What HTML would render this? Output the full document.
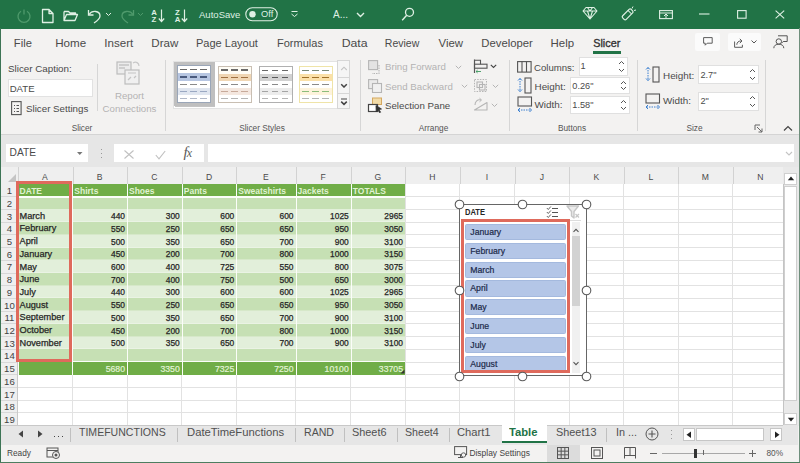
<!DOCTYPE html>
<html><head><meta charset="utf-8"><style>
html,body{margin:0;padding:0;}
body{width:800px;height:463px;overflow:hidden;position:relative;font-family:"Liberation Sans", sans-serif;background:#f3f2f1;}
</style></head><body>
<div style="position:absolute;left:0px;top:0px;width:800px;height:29px;background:#217346"></div>
<svg style="position:absolute;left:16px;top:8px;" width="16" height="16" viewBox="0 0 16 16" fill="none"><path d="M5 3.2 A6 6 0 1 0 11 3.2" stroke="#4f9a6c" stroke-width="1.3"/><path d="M8 1.5v5" stroke="#4f9a6c" stroke-width="1.3"/></svg>
<svg style="position:absolute;left:41px;top:8px;" width="14" height="16" viewBox="0 0 14 16" fill="none"><path d="M1.5 1.5h6.5l4 4v9h-10.5z M8 1.5v4h4" stroke="#dff0e4" stroke-width="1.3" stroke-linejoin="round"/></svg>
<svg style="position:absolute;left:63px;top:10px;" width="16" height="12" viewBox="0 0 16 12" fill="none"><path d="M1 1.5h4.5l1.5 1.5h5.5v2 M1 1.5v9h11l2.5-6h-11l-2.5 6" stroke="#dff0e4" stroke-width="1.3" stroke-linejoin="round"/></svg>
<svg style="position:absolute;left:87px;top:8px;" width="16" height="16" viewBox="0 0 16 16" fill="none"><path d="M2 6.5 C5 2, 13 2.5, 13 8 C13 11, 10 13, 7 15" stroke="#dff0e4" stroke-width="1.3"/><path d="M1.5 2v5h5" stroke="#dff0e4" stroke-width="1.3"/></svg>
<svg style="position:absolute;left:105px;top:12px;" width="7" height="5" viewBox="0 0 7 5" fill="none"><path d="M1 1l2.5 2.5L6 1" stroke="#dff0e4" stroke-width="1"/></svg>
<svg style="position:absolute;left:119px;top:8px;" width="16" height="16" viewBox="0 0 16 16" fill="none"><path d="M14 6.5 C11 2, 3 2.5, 3 8 C3 11, 6 13, 9 15" stroke="#4f9a6c" stroke-width="1.3"/><path d="M14.5 2v5h-5" stroke="#4f9a6c" stroke-width="1.3"/></svg>
<svg style="position:absolute;left:137px;top:12px;" width="7" height="5" viewBox="0 0 7 5" fill="none"><path d="M1 1l2.5 2.5L6 1" stroke="#4f9a6c" stroke-width="1"/></svg>
<div style="position:absolute;left:150px;top:8.5px;width:8px;font-size:7.8px;line-height:7px;font-weight:bold;color:#dff0e4;text-align:center">A<br>Z</div>
<svg style="position:absolute;left:158px;top:9px;" width="7" height="14" viewBox="0 0 7 14" fill="none"><path d="M3.5 0.5v12 M0.8 9.5l2.7 3 2.7-3" stroke="#dff0e4" stroke-width="1.2"/></svg>
<div style="position:absolute;left:173.5px;top:8.5px;width:8px;font-size:7.8px;line-height:7px;font-weight:bold;color:#dff0e4;text-align:center">Z<br>A</div>
<svg style="position:absolute;left:181px;top:9px;" width="7" height="14" viewBox="0 0 7 14" fill="none"><path d="M3.5 0.5v12 M0.8 9.5l2.7 3 2.7-3" stroke="#dff0e4" stroke-width="1.2"/></svg>
<div style="position:absolute;left:199px;top:9.825px;font-size:9.55px;line-height:9.55px;color:#dff0e4;font-weight:normal;white-space:nowrap;">AutoSave</div>
<svg style="position:absolute;left:245px;top:7px;" width="33" height="15" viewBox="0 0 33 15" fill="none"><rect x="0.8" y="0.8" width="31.4" height="13" rx="6.5" stroke="#dff0e4" stroke-width="1.1"/><circle cx="7.5" cy="7.3" r="3.2" fill="#dff0e4"/></svg>
<div style="position:absolute;left:261px;top:9.85px;font-size:9.3px;line-height:9.3px;color:#dff0e4;font-weight:normal;white-space:nowrap;">Off</div>
<svg style="position:absolute;left:290px;top:10px;" width="9" height="9" viewBox="0 0 9 9" fill="none"><path d="M1.5 1.5h6 M1.5 4l3 2.5 3-2.5" stroke="#dff0e4" stroke-width="1"/></svg>
<div style="position:absolute;left:333px;top:9.5px;font-size:10px;line-height:10px;color:#dff0e4;font-weight:normal;white-space:nowrap;">A...</div>
<svg style="position:absolute;left:355.5px;top:12px;" width="9" height="6" viewBox="0 0 9 6" fill="none"><path d="M1 1l3.5 3.5L8 1" stroke="#dff0e4" stroke-width="1.4"/></svg>
<svg style="position:absolute;left:400px;top:6px;" width="16" height="18" viewBox="0 0 16 18" fill="none"><circle cx="9.5" cy="6.3" r="4" stroke="#dff0e4" stroke-width="1.3"/><path d="M6.7 9.3l-4.5 5" stroke="#dff0e4" stroke-width="1.4"/></svg>
<svg style="position:absolute;left:582px;top:6px;" width="16" height="14" viewBox="0 0 16 14" fill="none"><path d="M1 5l3-3.5h8l3 3.5-7 8z M1 5h14 M5.5 1.5l2.5 3.5 2.5-3.5 M5.5 5l2.5 8 2.5-8" stroke="#dff0e4" stroke-width="1.1" stroke-linejoin="round"/></svg>
<svg style="position:absolute;left:619px;top:5px;" width="18" height="18" viewBox="0 0 18 18" fill="none"><g transform="rotate(45 9 9)"><rect x="6.5" y="3.5" width="5" height="12" rx="1.5" stroke="#dff0e4" stroke-width="1.2"/><path d="M6.5 6.5h5" stroke="#dff0e4" stroke-width="1"/></g><path d="M13 3.5l1-2 M15 5.5l2-0.5" stroke="#dff0e4" stroke-width="1"/></svg>
<svg style="position:absolute;left:659px;top:10px;" width="14" height="10" viewBox="0 0 14 10" fill="none"><rect x="0.6" y="0.6" width="12.8" height="8" stroke="#dff0e4" stroke-width="1.1"/><path d="M0.6 3h12.8 M7 4v4 M5 6l2-2 2 2" stroke="#dff0e4" stroke-width="1"/></svg>
<svg style="position:absolute;left:699px;top:13px;" width="11" height="2" viewBox="0 0 11 2" fill="none"><path d="M0 1h10.5" stroke="#dff0e4" stroke-width="1.1"/></svg>
<svg style="position:absolute;left:737px;top:10px;" width="10" height="9" viewBox="0 0 10 9" fill="none"><rect x="0.6" y="0.6" width="8.5" height="7.6" stroke="#dff0e4" stroke-width="1.1"/></svg>
<svg style="position:absolute;left:775px;top:10px;" width="10" height="9" viewBox="0 0 10 9" fill="none"><path d="M0.6 0.6l8.6 7.8 M9.2 0.6l-8.6 7.8" stroke="#dff0e4" stroke-width="1.1"/></svg>
<div style="position:absolute;left:0px;top:28.5px;width:800px;height:105.5px;background:#f3f2f1"></div>
<div style="position:absolute;left:-6px;top:37px;width:58px;text-align:center;font-size:11px;line-height:12px;color:#4a4a4a;font-weight:normal;white-space:nowrap"><span style="display:inline-block;transform:scaleX(1.015);transform-origin:center">File</span></div>
<div style="position:absolute;left:35px;top:37px;width:71px;text-align:center;font-size:11px;line-height:12px;color:#4a4a4a;font-weight:normal;white-space:nowrap"><span style="display:inline-block;transform:scaleX(1.056);transform-origin:center">Home</span></div>
<div style="position:absolute;left:84px;top:37px;width:69px;text-align:center;font-size:11px;line-height:12px;color:#4a4a4a;font-weight:normal;white-space:nowrap"><span style="display:inline-block;transform:scaleX(1.054);transform-origin:center">Insert</span></div>
<div style="position:absolute;left:131px;top:37px;width:67px;text-align:center;font-size:11px;line-height:12px;color:#4a4a4a;font-weight:normal;white-space:nowrap"><span style="display:inline-block;transform:scaleX(1.052);transform-origin:center">Draw</span></div>
<div style="position:absolute;left:176px;top:37px;width:102px;text-align:center;font-size:11px;line-height:12px;color:#4a4a4a;font-weight:normal;white-space:nowrap"><span style="display:inline-block;transform:scaleX(1.004);transform-origin:center">Page Layout</span></div>
<div style="position:absolute;left:257px;top:37px;width:86px;text-align:center;font-size:11px;line-height:12px;color:#4a4a4a;font-weight:normal;white-space:nowrap"><span style="display:inline-block;transform:scaleX(1.003);transform-origin:center">Formulas</span></div>
<div style="position:absolute;left:322px;top:37px;width:66px;text-align:center;font-size:11px;line-height:12px;color:#4a4a4a;font-weight:normal;white-space:nowrap"><span style="display:inline-block;transform:scaleX(1.118);transform-origin:center">Data</span></div>
<div style="position:absolute;left:364.5px;top:37px;width:74.5px;text-align:center;font-size:11px;line-height:12px;color:#4a4a4a;font-weight:normal;white-space:nowrap"><span style="display:inline-block;transform:scaleX(0.956);transform-origin:center">Review</span></div>
<div style="position:absolute;left:418.5px;top:37px;width:64.5px;text-align:center;font-size:11px;line-height:12px;color:#4a4a4a;font-weight:normal;white-space:nowrap"><span style="display:inline-block;transform:scaleX(1.036);transform-origin:center">View</span></div>
<div style="position:absolute;left:461px;top:37px;width:91.5px;text-align:center;font-size:11px;line-height:12px;color:#4a4a4a;font-weight:normal;white-space:nowrap"><span style="display:inline-block;transform:scaleX(1.027);transform-origin:center">Developer</span></div>
<div style="position:absolute;left:531px;top:37px;width:63.5px;text-align:center;font-size:11px;line-height:12px;color:#4a4a4a;font-weight:normal;white-space:nowrap"><span style="display:inline-block;transform:scaleX(1.039);transform-origin:center">Help</span></div>
<div style="position:absolute;left:573px;top:37px;width:67px;text-align:center;font-size:11px;line-height:12px;color:#333;font-weight:normal;-webkit-text-stroke:0.35px #333;white-space:nowrap"><span style="display:inline-block;transform:scaleX(0.981);transform-origin:center">Slicer</span></div>
<div style="position:absolute;left:593px;top:51.3px;width:27.5px;height:2.3px;background:#217346"></div>
<div style="position:absolute;left:695px;top:33px;width:25px;height:18px;background:#fbfbfb;border-radius:2px"></div>
<svg style="position:absolute;left:702.5px;top:37.3px;" width="10" height="9" viewBox="0 0 10 9" fill="none"><path d="M0.6 0.6h8.6v5.6h-5l-2 2v-2h-1.6z" stroke="#555" stroke-width="0.95" stroke-linejoin="round"/></svg>
<div style="position:absolute;left:728px;top:33px;width:33px;height:18px;background:#fbfbfb;border-radius:2px"></div>
<svg style="position:absolute;left:734px;top:37.5px;" width="11" height="10" viewBox="0 0 11 10" fill="none"><path d="M0.6 3.5v5.8h7.8v-2.5 M2.8 6.8c0-2.6 1.8-3.8 4.3-3.8 M5.8 0.8l2.2 2.2-2.2 2.2" stroke="#555" stroke-width="0.95" stroke-linejoin="round"/></svg>
<svg style="position:absolute;left:751px;top:40px;" width="6" height="4" viewBox="0 0 6 4" fill="none"><path d="M0.5 0.5l2.5 2.5 2.5-2.5" stroke="#555" stroke-width="1"/></svg>
<svg style="position:absolute;left:773px;top:34.5px;" width="15" height="14" viewBox="0 0 15 14" fill="none"><path d="M5 0.8h9.2v5.7h-4l-1.8 1.8" stroke="#555" stroke-width="1"/><circle cx="5.8" cy="6.5" r="2.7" stroke="#555" stroke-width="1"/><path d="M0.8 13.2c0-2.7 2.2-4 5-4s5 1.3 5 4" stroke="#555" stroke-width="1"/></svg>
<div style="position:absolute;left:97px;top:64px;width:1px;height:47px;background:#d6d6d6"></div>
<div style="position:absolute;left:165px;top:60px;width:1px;height:71px;background:#d6d6d6"></div>
<div style="position:absolute;left:359.5px;top:60px;width:1px;height:71px;background:#d6d6d6"></div>
<div style="position:absolute;left:508.5px;top:60px;width:1px;height:71px;background:#d6d6d6"></div>
<div style="position:absolute;left:637px;top:60px;width:1px;height:71px;background:#d6d6d6"></div>
<div style="position:absolute;left:765px;top:60px;width:1px;height:71px;background:#d6d6d6"></div>
<div style="position:absolute;left:8px;top:63.6px;font-size:9.8px;line-height:9.8px;color:#4a4a4a;font-weight:normal;white-space:nowrap;">Slicer Caption:</div>
<div style="position:absolute;left:8px;top:79px;width:85px;height:18px;background:#fff;border:1px solid #e2e2e2;box-sizing:border-box"></div>
<div style="position:absolute;left:9.7px;top:83.5px;font-size:9.6px;line-height:9.6px;color:#4a4a4a;font-weight:normal;white-space:nowrap;">DATE</div>
<svg style="position:absolute;left:11px;top:101px;" width="12" height="15" viewBox="0 0 12 15" fill="none"><rect x="0.6" y="0.6" width="9.5" height="13" stroke="#555" stroke-width="1.1"/><path d="M3 4.5h1 M5.5 4.5h2.5 M3 7.5h1 M5.5 7.5h2.5 M3 10.5h1 M5.5 10.5h2.5" stroke="#555" stroke-width="1"/></svg>
<div style="position:absolute;left:26px;top:103.625px;font-size:9.75px;line-height:9.75px;color:#4a4a4a;font-weight:normal;white-space:nowrap;">Slicer Settings</div>
<svg style="position:absolute;left:116px;top:60px;" width="30" height="27" viewBox="0 0 30 27" fill="none"><rect x="1" y="2" width="14" height="12" stroke="#bdbdbd" stroke-width="1.2" fill="#ececec"/><path d="M3 5h10 M3 8h6" stroke="#c4c4c4" stroke-width="1.3"/><rect x="9" y="10" width="14" height="14" stroke="#bdbdbd" stroke-width="1.2" fill="#f0f0f0"/><path d="M12 20l3-3 M18 18l2-2 M12 13h8" stroke="#c4c4c4" stroke-width="1.2"/><path d="M17 3c3-2 6 0 6 3" stroke="#c8c8c8" stroke-width="1.2"/></svg>
<div style="position:absolute;left:29.5px;top:90.65px;width:200px;text-align:center;font-size:9.7px;line-height:9.7px;color:#b3b3b3;font-weight:normal;white-space:nowrap;">Report</div>
<div style="position:absolute;left:29.5px;top:103.65px;width:200px;text-align:center;font-size:9.7px;line-height:9.7px;color:#b3b3b3;font-weight:normal;white-space:nowrap;">Connections</div>
<div style="position:absolute;left:-18px;top:124.04999999999998px;width:200px;text-align:center;font-size:8.3px;line-height:8.3px;color:#555;font-weight:normal;white-space:nowrap;">Slicer</div>
<div style="position:absolute;left:172.5px;top:60.5px;width:165px;height:48px;background:#fff;border:1px solid #e3e3e3;box-sizing:border-box"></div>
<div style="position:absolute;left:174.5px;top:63px;width:40px;height:43.5px;background:#c4c4c4"></div>
<div style="position:absolute;left:174.1px;top:62.4px;width:40.8px;height:44px;background:#bfbfbf"></div>
<div style="position:absolute;left:177.2px;top:65.2px;width:34.2px;height:38.3px;background:#fff;border:1px solid #9aa6b8;box-sizing:border-box"></div>
<div style="position:absolute;left:178.2px;top:66.2px;width:32.2px;height:7.26px;background:#fff"></div>
<div style="position:absolute;left:180.2px;top:69.23px;width:6.5px;height:1.2px;background:#6a6a6a"></div>
<div style="position:absolute;left:190.2px;top:69.23px;width:6.5px;height:1.2px;background:#6a6a6a"></div>
<div style="position:absolute;left:200.2px;top:69.23px;width:6.5px;height:1.2px;background:#6a6a6a"></div>
<div style="position:absolute;left:178.2px;top:73.46000000000001px;width:32.2px;height:7.26px;background:#b7c6e2"></div>
<div style="position:absolute;left:180.2px;top:76.49000000000001px;width:6.5px;height:1.2px;background:#4a5a7e"></div>
<div style="position:absolute;left:190.2px;top:76.49000000000001px;width:6.5px;height:1.2px;background:#4a5a7e"></div>
<div style="position:absolute;left:200.2px;top:76.49000000000001px;width:6.5px;height:1.2px;background:#4a5a7e"></div>
<div style="position:absolute;left:178.2px;top:80.72px;width:32.2px;height:7.26px;background:#fff"></div>
<div style="position:absolute;left:180.2px;top:83.75px;width:6.5px;height:1.2px;background:#8a8a8a"></div>
<div style="position:absolute;left:190.2px;top:83.75px;width:6.5px;height:1.2px;background:#8a8a8a"></div>
<div style="position:absolute;left:200.2px;top:83.75px;width:6.5px;height:1.2px;background:#8a8a8a"></div>
<div style="position:absolute;left:178.2px;top:87.98px;width:32.2px;height:7.26px;background:#dfe5ef"></div>
<div style="position:absolute;left:180.2px;top:91.01px;width:6.5px;height:1.2px;background:#9aa8c2"></div>
<div style="position:absolute;left:190.2px;top:91.01px;width:6.5px;height:1.2px;background:#9aa8c2"></div>
<div style="position:absolute;left:200.2px;top:91.01px;width:6.5px;height:1.2px;background:#9aa8c2"></div>
<div style="position:absolute;left:178.2px;top:95.24000000000001px;width:32.2px;height:7.26px;background:#fff"></div>
<div style="position:absolute;left:180.2px;top:98.27000000000001px;width:6.5px;height:1.2px;background:#b0b8c8"></div>
<div style="position:absolute;left:190.2px;top:98.27000000000001px;width:6.5px;height:1.2px;background:#b0b8c8"></div>
<div style="position:absolute;left:200.2px;top:98.27000000000001px;width:6.5px;height:1.2px;background:#b0b8c8"></div>
<div style="position:absolute;left:218px;top:65.5px;width:33.6px;height:37.5px;background:#fff;border:1px solid #c9bfb3;box-sizing:border-box"></div>
<div style="position:absolute;left:219px;top:66.5px;width:31.6px;height:7.1px;background:#fffdf6"></div>
<div style="position:absolute;left:221px;top:69.45px;width:6.5px;height:1.2px;background:#6a6a6a"></div>
<div style="position:absolute;left:231px;top:69.45px;width:6.5px;height:1.2px;background:#6a6a6a"></div>
<div style="position:absolute;left:241px;top:69.45px;width:6.5px;height:1.2px;background:#6a6a6a"></div>
<div style="position:absolute;left:219px;top:73.6px;width:31.6px;height:7.1px;background:#f0d6b4"></div>
<div style="position:absolute;left:221px;top:76.55px;width:6.5px;height:1.2px;background:#a07040"></div>
<div style="position:absolute;left:231px;top:76.55px;width:6.5px;height:1.2px;background:#a07040"></div>
<div style="position:absolute;left:241px;top:76.55px;width:6.5px;height:1.2px;background:#a07040"></div>
<div style="position:absolute;left:219px;top:80.7px;width:31.6px;height:7.1px;background:#fff"></div>
<div style="position:absolute;left:221px;top:83.65px;width:6.5px;height:1.2px;background:#8a8a8a"></div>
<div style="position:absolute;left:231px;top:83.65px;width:6.5px;height:1.2px;background:#8a8a8a"></div>
<div style="position:absolute;left:241px;top:83.65px;width:6.5px;height:1.2px;background:#8a8a8a"></div>
<div style="position:absolute;left:219px;top:87.8px;width:31.6px;height:7.1px;background:#f4e7df"></div>
<div style="position:absolute;left:221px;top:90.75px;width:6.5px;height:1.2px;background:#c8aa9a"></div>
<div style="position:absolute;left:231px;top:90.75px;width:6.5px;height:1.2px;background:#c8aa9a"></div>
<div style="position:absolute;left:241px;top:90.75px;width:6.5px;height:1.2px;background:#c8aa9a"></div>
<div style="position:absolute;left:219px;top:94.9px;width:31.6px;height:7.1px;background:#fff"></div>
<div style="position:absolute;left:221px;top:97.85000000000001px;width:6.5px;height:1.2px;background:#b4b4b4"></div>
<div style="position:absolute;left:231px;top:97.85000000000001px;width:6.5px;height:1.2px;background:#b4b4b4"></div>
<div style="position:absolute;left:241px;top:97.85000000000001px;width:6.5px;height:1.2px;background:#b4b4b4"></div>
<div style="position:absolute;left:258.5px;top:65.7px;width:34.2px;height:37.3px;background:#fff;border:1px solid #b0b0b0;box-sizing:border-box"></div>
<div style="position:absolute;left:259.5px;top:66.7px;width:32.2px;height:7.06px;background:#fff"></div>
<div style="position:absolute;left:261.5px;top:69.63000000000001px;width:6.5px;height:1.2px;background:#6a6a6a"></div>
<div style="position:absolute;left:271.5px;top:69.63000000000001px;width:6.5px;height:1.2px;background:#6a6a6a"></div>
<div style="position:absolute;left:281.5px;top:69.63000000000001px;width:6.5px;height:1.2px;background:#6a6a6a"></div>
<div style="position:absolute;left:259.5px;top:73.76px;width:32.2px;height:7.06px;background:#d2d2d2"></div>
<div style="position:absolute;left:261.5px;top:76.69000000000001px;width:6.5px;height:1.2px;background:#5a5a5a"></div>
<div style="position:absolute;left:271.5px;top:76.69000000000001px;width:6.5px;height:1.2px;background:#5a5a5a"></div>
<div style="position:absolute;left:281.5px;top:76.69000000000001px;width:6.5px;height:1.2px;background:#5a5a5a"></div>
<div style="position:absolute;left:259.5px;top:80.82000000000001px;width:32.2px;height:7.06px;background:#fff"></div>
<div style="position:absolute;left:261.5px;top:83.75000000000001px;width:6.5px;height:1.2px;background:#8a8a8a"></div>
<div style="position:absolute;left:271.5px;top:83.75000000000001px;width:6.5px;height:1.2px;background:#8a8a8a"></div>
<div style="position:absolute;left:281.5px;top:83.75000000000001px;width:6.5px;height:1.2px;background:#8a8a8a"></div>
<div style="position:absolute;left:259.5px;top:87.88px;width:32.2px;height:7.06px;background:#ececec"></div>
<div style="position:absolute;left:261.5px;top:90.81px;width:6.5px;height:1.2px;background:#a4a4a4"></div>
<div style="position:absolute;left:271.5px;top:90.81px;width:6.5px;height:1.2px;background:#a4a4a4"></div>
<div style="position:absolute;left:281.5px;top:90.81px;width:6.5px;height:1.2px;background:#a4a4a4"></div>
<div style="position:absolute;left:259.5px;top:94.94px;width:32.2px;height:7.06px;background:#fff"></div>
<div style="position:absolute;left:261.5px;top:97.87px;width:6.5px;height:1.2px;background:#b4b4b4"></div>
<div style="position:absolute;left:271.5px;top:97.87px;width:6.5px;height:1.2px;background:#b4b4b4"></div>
<div style="position:absolute;left:281.5px;top:97.87px;width:6.5px;height:1.2px;background:#b4b4b4"></div>
<div style="position:absolute;left:299.4px;top:65.7px;width:34.1px;height:37.3px;background:#fff;border:1px solid #efe4a8;box-sizing:border-box"></div>
<div style="position:absolute;left:300.4px;top:66.7px;width:32.1px;height:7.06px;background:#fff"></div>
<div style="position:absolute;left:302.4px;top:69.63000000000001px;width:6.5px;height:1.2px;background:#7a8a7a"></div>
<div style="position:absolute;left:312.4px;top:69.63000000000001px;width:6.5px;height:1.2px;background:#7a8a7a"></div>
<div style="position:absolute;left:322.4px;top:69.63000000000001px;width:6.5px;height:1.2px;background:#7a8a7a"></div>
<div style="position:absolute;left:300.4px;top:73.76px;width:32.1px;height:7.06px;background:#fbe0a8"></div>
<div style="position:absolute;left:302.4px;top:76.69000000000001px;width:6.5px;height:1.2px;background:#a07028"></div>
<div style="position:absolute;left:312.4px;top:76.69000000000001px;width:6.5px;height:1.2px;background:#a07028"></div>
<div style="position:absolute;left:322.4px;top:76.69000000000001px;width:6.5px;height:1.2px;background:#a07028"></div>
<div style="position:absolute;left:300.4px;top:80.82000000000001px;width:32.1px;height:7.06px;background:#fff"></div>
<div style="position:absolute;left:302.4px;top:83.75000000000001px;width:6.5px;height:1.2px;background:#8a8a8a"></div>
<div style="position:absolute;left:312.4px;top:83.75000000000001px;width:6.5px;height:1.2px;background:#8a8a8a"></div>
<div style="position:absolute;left:322.4px;top:83.75000000000001px;width:6.5px;height:1.2px;background:#8a8a8a"></div>
<div style="position:absolute;left:300.4px;top:87.88px;width:32.1px;height:7.06px;background:#fdf3dc"></div>
<div style="position:absolute;left:302.4px;top:90.81px;width:6.5px;height:1.2px;background:#8cbc7c"></div>
<div style="position:absolute;left:312.4px;top:90.81px;width:6.5px;height:1.2px;background:#8cbc7c"></div>
<div style="position:absolute;left:322.4px;top:90.81px;width:6.5px;height:1.2px;background:#8cbc7c"></div>
<div style="position:absolute;left:300.4px;top:94.94px;width:32.1px;height:7.06px;background:#fff"></div>
<div style="position:absolute;left:302.4px;top:97.87px;width:6.5px;height:1.2px;background:#b4b4b4"></div>
<div style="position:absolute;left:312.4px;top:97.87px;width:6.5px;height:1.2px;background:#b4b4b4"></div>
<div style="position:absolute;left:322.4px;top:97.87px;width:6.5px;height:1.2px;background:#b4b4b4"></div>
<div style="position:absolute;left:337.3px;top:60.2px;width:12.3px;height:49.2px;background:#f5f5f5;border:1px solid #d6d6d6;box-sizing:border-box"></div>
<div style="position:absolute;left:337.3px;top:77px;width:12.3px;height:1px;background:#d6d6d6"></div>
<div style="position:absolute;left:337.3px;top:93.2px;width:12.3px;height:1px;background:#d6d6d6"></div>
<svg style="position:absolute;left:339.5px;top:66px;" width="8" height="5" viewBox="0 0 8 5" fill="none"><path d="M1.2 4l2.8-2.8 2.8 2.8" stroke="#c4c4c4" stroke-width="1.1"/></svg>
<svg style="position:absolute;left:339.5px;top:83px;" width="8" height="5" viewBox="0 0 8 5" fill="none"><path d="M1.2 1.2l2.8 2.8 2.8-2.8" stroke="#444" stroke-width="1.5"/></svg>
<svg style="position:absolute;left:339.5px;top:97.5px;" width="8" height="8" viewBox="0 0 8 8" fill="none"><path d="M1 1h6" stroke="#555" stroke-width="1.1"/><path d="M1.2 3.6l2.8 2.8 2.8-2.8" stroke="#444" stroke-width="1.5"/></svg>
<div style="position:absolute;left:162px;top:124.04999999999998px;width:200px;text-align:center;font-size:8.3px;line-height:8.3px;color:#555;font-weight:normal;white-space:nowrap;">Slicer Styles</div>
<svg style="position:absolute;left:368px;top:60px;" width="15" height="14" viewBox="0 0 15 14" fill="none"><rect x="0.6" y="0.6" width="9" height="9" stroke="#b5b5b5" stroke-width="1.1" fill="#e3e3e3"/><path d="M11 5v8.5h-7" stroke="#b5b5b5" stroke-width="1.1" stroke-dasharray="1.5 1"/></svg>
<div style="position:absolute;left:385px;top:62.449999999999996px;font-size:9.7px;line-height:9.7px;color:#b3b3b3;font-weight:normal;white-space:nowrap;">Bring Forward</div>
<svg style="position:absolute;left:455px;top:65px;" width="7" height="5" viewBox="0 0 7 5" fill="none"><path d="M0.8 0.8l2.7 2.7 2.7-2.7" stroke="#b5b5b5" stroke-width="1"/></svg>
<svg style="position:absolute;left:368px;top:79px;" width="15" height="14" viewBox="0 0 15 14" fill="none"><rect x="0.6" y="0.6" width="9" height="9" stroke="#b5b5b5" stroke-width="1.1" fill="#eaeaea"/><rect x="4.5" y="4.5" width="9" height="9" stroke="#b5b5b5" stroke-width="1.1" fill="#f0f0f0"/></svg>
<div style="position:absolute;left:385px;top:81.55000000000001px;font-size:9.7px;line-height:9.7px;color:#b3b3b3;font-weight:normal;white-space:nowrap;">Send Backward</div>
<svg style="position:absolute;left:461px;top:84px;" width="7" height="5" viewBox="0 0 7 5" fill="none"><path d="M0.8 0.8l2.7 2.7 2.7-2.7" stroke="#b5b5b5" stroke-width="1"/></svg>
<svg style="position:absolute;left:367px;top:97px;" width="16" height="16" viewBox="0 0 16 16" fill="none"><rect x="5.5" y="1" width="9" height="6.5" stroke="#d4a860" stroke-width="1" fill="#f3dca8"/><rect x="1.5" y="7.5" width="9" height="7" stroke="#444" stroke-width="1.2" fill="#fff"/><path d="M9 8.5l5.5 3.5-2.5 0.6 1.6 2.6-1 0.6-1.6-2.6-1.8 1.8z" stroke="#333" stroke-width="0.8" fill="#333"/></svg>
<div style="position:absolute;left:385px;top:100.75px;font-size:9.7px;line-height:9.7px;color:#4a4a4a;font-weight:normal;white-space:nowrap;">Selection Pane</div>
<svg style="position:absolute;left:473px;top:59px;" width="16" height="15" viewBox="0 0 16 15" fill="none"><path d="M1.5 0.5v13.5" stroke="#555" stroke-width="1.2"/><path d="M1.5 1.2h6v4" stroke="#555" stroke-width="1.1"/><rect x="1.5" y="5.2" width="12.5" height="4" stroke="#555" stroke-width="1.1"/><path d="M3 12.5h5 M3 12.5l1.6-1.4 M3 12.5l1.6 1.4" stroke="#3d9a60" stroke-width="0.9"/></svg>
<svg style="position:absolute;left:490px;top:64px;" width="7" height="5" viewBox="0 0 7 5" fill="none"><path d="M0.8 0.8l2.7 2.7 2.7-2.7" stroke="#444" stroke-width="1.1"/></svg>
<svg style="position:absolute;left:473px;top:78px;" width="16" height="15" viewBox="0 0 16 15" fill="none"><rect x="1.5" y="1.5" width="12" height="12" stroke="#b5b5b5" stroke-width="1" stroke-dasharray="1.5 1.2"/><rect x="4" y="4" width="5.5" height="5.5" stroke="#b5b5b5" stroke-width="1.1"/><rect x="6.5" y="6.5" width="5.5" height="5.5" stroke="#b5b5b5" stroke-width="1.1"/></svg>
<svg style="position:absolute;left:492px;top:84px;" width="7" height="5" viewBox="0 0 7 5" fill="none"><path d="M0.8 0.8l2.7 2.7 2.7-2.7" stroke="#b5b5b5" stroke-width="1"/></svg>
<svg style="position:absolute;left:473px;top:97px;" width="16" height="15" viewBox="0 0 16 15" fill="none"><path d="M1.5 13h12.5v-7.5z" stroke="#b5b5b5" stroke-width="1.1" stroke-linejoin="round"/><path d="M2 8c0-3.5 2.5-6 6-5" stroke="#b5b5b5" stroke-width="1.1"/><path d="M6.5 1.2l2 1.8-2 1.8" stroke="#b5b5b5" stroke-width="1"/></svg>
<svg style="position:absolute;left:491px;top:103px;" width="7" height="5" viewBox="0 0 7 5" fill="none"><path d="M0.8 0.8l2.7 2.7 2.7-2.7" stroke="#b5b5b5" stroke-width="1"/></svg>
<div style="position:absolute;left:333.5px;top:124.04999999999998px;width:200px;text-align:center;font-size:8.3px;line-height:8.3px;color:#555;font-weight:normal;white-space:nowrap;">Arrange</div>
<svg style="position:absolute;left:517px;top:61px;" width="15" height="12" viewBox="0 0 15 12" fill="none"><rect x="0.6" y="0.6" width="13.5" height="10.5" stroke="#555" stroke-width="1.1"/><path d="M5 0.6v10.5 M9.5 0.6v10.5" stroke="#555" stroke-width="1.1"/></svg>
<div style="position:absolute;left:534px;top:62.7px;font-size:9.6px;line-height:9.6px;color:#4a4a4a;font-weight:normal;white-space:nowrap;">Columns:</div>
<div style="position:absolute;left:578.5px;top:57px;width:49px;height:19px;background:#fff;border:1px solid #e0e0e0;box-sizing:border-box"></div>
<div style="position:absolute;left:580.5px;top:62.4px;font-size:9.2px;line-height:9.2px;color:#4a4a4a;font-weight:normal;white-space:nowrap;">1</div>
<svg style="position:absolute;left:617.5px;top:60px;" width="7" height="5" viewBox="0 0 7 5" fill="none"><path d="M1 4l2.5-2.5L6 4" stroke="#555" stroke-width="1"/></svg>
<svg style="position:absolute;left:617.5px;top:68px;" width="7" height="5" viewBox="0 0 7 5" fill="none"><path d="M1 1l2.5 2.5L6 1" stroke="#555" stroke-width="1"/></svg>
<svg style="position:absolute;left:517px;top:77px;" width="16" height="17" viewBox="0 0 16 17" fill="none"><path d="M3 1.5v13" stroke="#3a7fd0" stroke-width="1" stroke-dasharray="1.5 1"/><path d="M1 3.5l2-2 2 2 M1 12.5l2 2 2-2" stroke="#3a7fd0" stroke-width="1"/><rect x="8" y="1" width="6" height="15" stroke="#555" stroke-width="1.1"/></svg>
<div style="position:absolute;left:534.5px;top:81.64999999999999px;font-size:9.9px;line-height:9.9px;color:#4a4a4a;font-weight:normal;white-space:nowrap;">Height:</div>
<div style="position:absolute;left:570.3px;top:77.4px;width:60px;height:17px;background:#fff;border:1px solid #e0e0e0;box-sizing:border-box"></div>
<div style="position:absolute;left:572.3px;top:81.80000000000001px;font-size:9.2px;line-height:9.2px;color:#4a4a4a;font-weight:normal;white-space:nowrap;">0.26"</div>
<svg style="position:absolute;left:620.3px;top:80.4px;" width="7" height="5" viewBox="0 0 7 5" fill="none"><path d="M1 4l2.5-2.5L6 4" stroke="#555" stroke-width="1"/></svg>
<svg style="position:absolute;left:620.3px;top:86.4px;" width="7" height="5" viewBox="0 0 7 5" fill="none"><path d="M1 1l2.5 2.5L6 1" stroke="#555" stroke-width="1"/></svg>
<svg style="position:absolute;left:517px;top:96px;" width="16" height="17" viewBox="0 0 16 17" fill="none"><rect x="1" y="1" width="13.5" height="9" stroke="#555" stroke-width="1.1"/><path d="M1.5 14h12.5" stroke="#3a7fd0" stroke-width="1" stroke-dasharray="1.5 1"/><path d="M3 12l-2 2 2 2 M12.5 12l2 2-2 2" stroke="#3a7fd0" stroke-width="1"/></svg>
<div style="position:absolute;left:534.5px;top:100.05px;font-size:9.9px;line-height:9.9px;color:#4a4a4a;font-weight:normal;white-space:nowrap;">Width:</div>
<div style="position:absolute;left:570.3px;top:96.3px;width:60px;height:18px;background:#fff;border:1px solid #e0e0e0;box-sizing:border-box"></div>
<div style="position:absolute;left:572.3px;top:101.2px;font-size:9.2px;line-height:9.2px;color:#4a4a4a;font-weight:normal;white-space:nowrap;">1.58"</div>
<svg style="position:absolute;left:620.3px;top:99.3px;" width="7" height="5" viewBox="0 0 7 5" fill="none"><path d="M1 4l2.5-2.5L6 4" stroke="#555" stroke-width="1"/></svg>
<svg style="position:absolute;left:620.3px;top:106.3px;" width="7" height="5" viewBox="0 0 7 5" fill="none"><path d="M1 1l2.5 2.5L6 1" stroke="#555" stroke-width="1"/></svg>
<div style="position:absolute;left:472px;top:124.04999999999998px;width:200px;text-align:center;font-size:8.3px;line-height:8.3px;color:#555;font-weight:normal;white-space:nowrap;">Buttons</div>
<svg style="position:absolute;left:645px;top:66px;" width="16" height="17" viewBox="0 0 16 17" fill="none"><path d="M3 1.5v13" stroke="#3a7fd0" stroke-width="1" stroke-dasharray="1.5 1"/><path d="M1 3.5l2-2 2 2 M1 12.5l2 2 2-2" stroke="#3a7fd0" stroke-width="1"/><rect x="8" y="1" width="6" height="15" stroke="#555" stroke-width="1.1"/></svg>
<div style="position:absolute;left:663px;top:70.64999999999999px;font-size:9.9px;line-height:9.9px;color:#4a4a4a;font-weight:normal;white-space:nowrap;">Height:</div>
<div style="position:absolute;left:698.4px;top:65.2px;width:61px;height:19px;background:#fff;border:1px solid #e0e0e0;box-sizing:border-box"></div>
<div style="position:absolute;left:700.4px;top:70.60000000000001px;font-size:9.2px;line-height:9.2px;color:#4a4a4a;font-weight:normal;white-space:nowrap;">2.7"</div>
<svg style="position:absolute;left:749.4px;top:68.2px;" width="7" height="5" viewBox="0 0 7 5" fill="none"><path d="M1 4l2.5-2.5L6 4" stroke="#555" stroke-width="1"/></svg>
<svg style="position:absolute;left:749.4px;top:76.2px;" width="7" height="5" viewBox="0 0 7 5" fill="none"><path d="M1 1l2.5 2.5L6 1" stroke="#555" stroke-width="1"/></svg>
<svg style="position:absolute;left:645px;top:93px;" width="16" height="17" viewBox="0 0 16 17" fill="none"><rect x="1" y="1" width="13.5" height="9" stroke="#555" stroke-width="1.1"/><path d="M1.5 14h12.5" stroke="#3a7fd0" stroke-width="1" stroke-dasharray="1.5 1"/><path d="M3 12l-2 2 2 2 M12.5 12l2 2-2 2" stroke="#3a7fd0" stroke-width="1"/></svg>
<div style="position:absolute;left:663px;top:96.35px;font-size:9.9px;line-height:9.9px;color:#4a4a4a;font-weight:normal;white-space:nowrap;">Width:</div>
<div style="position:absolute;left:698.4px;top:92.2px;width:61px;height:18.5px;background:#fff;border:1px solid #e0e0e0;box-sizing:border-box"></div>
<div style="position:absolute;left:700.4px;top:97.35000000000001px;font-size:9.2px;line-height:9.2px;color:#4a4a4a;font-weight:normal;white-space:nowrap;">2"</div>
<svg style="position:absolute;left:749.4px;top:95.2px;" width="7" height="5" viewBox="0 0 7 5" fill="none"><path d="M1 4l2.5-2.5L6 4" stroke="#555" stroke-width="1"/></svg>
<svg style="position:absolute;left:749.4px;top:102.7px;" width="7" height="5" viewBox="0 0 7 5" fill="none"><path d="M1 1l2.5 2.5L6 1" stroke="#555" stroke-width="1"/></svg>
<div style="position:absolute;left:594.5px;top:124.04999999999998px;width:200px;text-align:center;font-size:8.3px;line-height:8.3px;color:#555;font-weight:normal;white-space:nowrap;">Size</div>
<svg style="position:absolute;left:754px;top:124px;" width="9" height="9" viewBox="0 0 9 9" fill="none"><path d="M1 1h5 M1 1v5 M3 3l5 5 M8 4.5v3.5h-3.5" stroke="#666" stroke-width="1"/></svg>
<svg style="position:absolute;left:783px;top:125px;" width="10" height="7" viewBox="0 0 10 7" fill="none"><path d="M1 5.5l4-4 4 4" stroke="#444" stroke-width="1.2"/></svg>
<div style="position:absolute;left:0px;top:133.5px;width:800px;height:1px;background:#d4d4d4"></div>
<div style="position:absolute;left:0px;top:134.5px;width:800px;height:32px;background:#e6e6e6"></div>
<div style="position:absolute;left:5.7px;top:143.7px;width:82.3px;height:18.7px;background:#fff"></div>
<div style="position:absolute;left:9.6px;top:148.1px;font-size:10.2px;line-height:10.2px;color:#4a4a4a;font-weight:normal;white-space:nowrap;">DATE</div>
<svg style="position:absolute;left:77px;top:151.5px;" width="6" height="4" viewBox="0 0 6 4" fill="none"><path d="M0 0h5.5l-2.75 3z" fill="#777"/></svg>
<div style="position:absolute;left:100.5px;top:148.5px;width:1.5px;height:1.5px;background:#9a9a9a"></div>
<div style="position:absolute;left:100.5px;top:152.5px;width:1.5px;height:1.5px;background:#9a9a9a"></div>
<div style="position:absolute;left:100.5px;top:156.5px;width:1.5px;height:1.5px;background:#9a9a9a"></div>
<div style="position:absolute;left:114.4px;top:144px;width:90px;height:18px;background:#fff"></div>
<svg style="position:absolute;left:123.5px;top:149.5px;" width="10" height="9" viewBox="0 0 10 9" fill="none"><path d="M0.5 0.5l9 8 M9.5 0.5l-9 8" stroke="#c0c0c0" stroke-width="1.1"/></svg>
<svg style="position:absolute;left:155px;top:149.5px;" width="11" height="10" viewBox="0 0 11 10" fill="none"><path d="M0.8 5l3.2 3.8L10.2 1" stroke="#c0c0c0" stroke-width="1.1"/></svg>
<div style="position:absolute;left:183.5px;top:144.5px;font-family:'Liberation Serif';font-style:italic;font-size:15px;line-height:15px;color:#5a5a5a;letter-spacing:-1px">f<span style="font-size:12px">x</span></div>
<div style="position:absolute;left:207.6px;top:144px;width:586px;height:18px;background:#fff"></div>
<svg style="position:absolute;left:784.5px;top:150.5px;" width="8" height="5" viewBox="0 0 8 5" fill="none"><path d="M1 1l3 3L7 1" stroke="#c4c4c4" stroke-width="1.1"/></svg>
<div style="position:absolute;left:1px;top:166.5px;width:782px;height:17.5px;background:#efefef"></div>
<div style="position:absolute;left:1px;top:183.5px;width:782px;height:1px;background:#c9c9c9"></div>
<svg style="position:absolute;left:7.5px;top:173.5px;" width="8" height="8" viewBox="0 0 8 8" fill="none"><path d="M8 0v8h-8z" fill="#c4c4c4"/></svg>
<div style="position:absolute;left:17.5px;top:167px;width:1px;height:17px;background:#d2d2d2"></div>
<div style="position:absolute;left:-55.1px;top:173.0px;width:200px;text-align:center;font-size:8.6px;line-height:8.6px;color:#4a4a4a;font-weight:normal;white-space:nowrap;">A</div>
<div style="position:absolute;left:72.5px;top:167px;width:1px;height:17px;background:#d2d2d2"></div>
<div style="position:absolute;left:-0.3499999999999943px;top:173.0px;width:200px;text-align:center;font-size:8.6px;line-height:8.6px;color:#4a4a4a;font-weight:normal;white-space:nowrap;">B</div>
<div style="position:absolute;left:127.0px;top:167px;width:1px;height:17px;background:#d2d2d2"></div>
<div style="position:absolute;left:54.375px;top:173.0px;width:200px;text-align:center;font-size:8.6px;line-height:8.6px;color:#4a4a4a;font-weight:normal;white-space:nowrap;">C</div>
<div style="position:absolute;left:182.0px;top:167px;width:1px;height:17px;background:#d2d2d2"></div>
<div style="position:absolute;left:109.0px;top:173.0px;width:200px;text-align:center;font-size:8.6px;line-height:8.6px;color:#4a4a4a;font-weight:normal;white-space:nowrap;">D</div>
<div style="position:absolute;left:236.0px;top:167px;width:1px;height:17px;background:#d2d2d2"></div>
<div style="position:absolute;left:165.875px;top:173.0px;width:200px;text-align:center;font-size:8.6px;line-height:8.6px;color:#4a4a4a;font-weight:normal;white-space:nowrap;">E</div>
<div style="position:absolute;left:295.5px;top:167px;width:1px;height:17px;background:#d2d2d2"></div>
<div style="position:absolute;left:223.125px;top:173.0px;width:200px;text-align:center;font-size:8.6px;line-height:8.6px;color:#4a4a4a;font-weight:normal;white-space:nowrap;">F</div>
<div style="position:absolute;left:351.0px;top:167px;width:1px;height:17px;background:#d2d2d2"></div>
<div style="position:absolute;left:277.875px;top:173.0px;width:200px;text-align:center;font-size:8.6px;line-height:8.6px;color:#4a4a4a;font-weight:normal;white-space:nowrap;">G</div>
<div style="position:absolute;left:405.0px;top:167px;width:1px;height:17px;background:#d2d2d2"></div>
<div style="position:absolute;left:332.25px;top:173.0px;width:200px;text-align:center;font-size:8.6px;line-height:8.6px;color:#4a4a4a;font-weight:normal;white-space:nowrap;">H</div>
<div style="position:absolute;left:459.5px;top:167px;width:1px;height:17px;background:#d2d2d2"></div>
<div style="position:absolute;left:386.95px;top:173.0px;width:200px;text-align:center;font-size:8.6px;line-height:8.6px;color:#4a4a4a;font-weight:normal;white-space:nowrap;">I</div>
<div style="position:absolute;left:514.5px;top:167px;width:1px;height:17px;background:#d2d2d2"></div>
<div style="position:absolute;left:441.79999999999995px;top:173.0px;width:200px;text-align:center;font-size:8.6px;line-height:8.6px;color:#4a4a4a;font-weight:normal;white-space:nowrap;">J</div>
<div style="position:absolute;left:569.0px;top:167px;width:1px;height:17px;background:#d2d2d2"></div>
<div style="position:absolute;left:496.4000000000001px;top:173.0px;width:200px;text-align:center;font-size:8.6px;line-height:8.6px;color:#4a4a4a;font-weight:normal;white-space:nowrap;">K</div>
<div style="position:absolute;left:623.5px;top:167px;width:1px;height:17px;background:#d2d2d2"></div>
<div style="position:absolute;left:550.8px;top:173.0px;width:200px;text-align:center;font-size:8.6px;line-height:8.6px;color:#4a4a4a;font-weight:normal;white-space:nowrap;">L</div>
<div style="position:absolute;left:678.0px;top:167px;width:1px;height:17px;background:#d2d2d2"></div>
<div style="position:absolute;left:605.4px;top:173.0px;width:200px;text-align:center;font-size:8.6px;line-height:8.6px;color:#4a4a4a;font-weight:normal;white-space:nowrap;">M</div>
<div style="position:absolute;left:733.0px;top:167px;width:1px;height:17px;background:#d2d2d2"></div>
<div style="position:absolute;left:660.3px;top:173.0px;width:200px;text-align:center;font-size:8.6px;line-height:8.6px;color:#4a4a4a;font-weight:normal;white-space:nowrap;">N</div>
<div style="position:absolute;left:1px;top:184px;width:782px;height:242px;background:#fff"></div>
<div style="position:absolute;left:1px;top:184px;width:16.5px;height:241.5px;background:#efefef"></div>
<div style="position:absolute;left:17px;top:184px;width:1px;height:241.5px;background:#c9c9c9"></div>
<div style="position:absolute;left:1px;top:196.22px;width:16px;height:1px;background:#d8d8d8"></div>
<div style="position:absolute;left:-90.6px;top:186.06px;width:200px;text-align:center;font-size:9.6px;line-height:9.6px;color:#444;font-weight:normal;white-space:nowrap;">1</div>
<div style="position:absolute;left:1px;top:208.94px;width:16px;height:1px;background:#d8d8d8"></div>
<div style="position:absolute;left:-90.6px;top:198.78px;width:200px;text-align:center;font-size:9.6px;line-height:9.6px;color:#444;font-weight:normal;white-space:nowrap;">2</div>
<div style="position:absolute;left:1px;top:221.66px;width:16px;height:1px;background:#d8d8d8"></div>
<div style="position:absolute;left:-90.6px;top:211.5px;width:200px;text-align:center;font-size:9.6px;line-height:9.6px;color:#444;font-weight:normal;white-space:nowrap;">3</div>
<div style="position:absolute;left:1px;top:234.38px;width:16px;height:1px;background:#d8d8d8"></div>
<div style="position:absolute;left:-90.6px;top:224.22px;width:200px;text-align:center;font-size:9.6px;line-height:9.6px;color:#444;font-weight:normal;white-space:nowrap;">4</div>
<div style="position:absolute;left:1px;top:247.1px;width:16px;height:1px;background:#d8d8d8"></div>
<div style="position:absolute;left:-90.6px;top:236.94px;width:200px;text-align:center;font-size:9.6px;line-height:9.6px;color:#444;font-weight:normal;white-space:nowrap;">5</div>
<div style="position:absolute;left:1px;top:259.82px;width:16px;height:1px;background:#d8d8d8"></div>
<div style="position:absolute;left:-90.6px;top:249.66px;width:200px;text-align:center;font-size:9.6px;line-height:9.6px;color:#444;font-weight:normal;white-space:nowrap;">6</div>
<div style="position:absolute;left:1px;top:272.54px;width:16px;height:1px;background:#d8d8d8"></div>
<div style="position:absolute;left:-90.6px;top:262.38px;width:200px;text-align:center;font-size:9.6px;line-height:9.6px;color:#444;font-weight:normal;white-space:nowrap;">7</div>
<div style="position:absolute;left:1px;top:285.26000000000005px;width:16px;height:1px;background:#d8d8d8"></div>
<div style="position:absolute;left:-90.6px;top:275.1px;width:200px;text-align:center;font-size:9.6px;line-height:9.6px;color:#444;font-weight:normal;white-space:nowrap;">8</div>
<div style="position:absolute;left:1px;top:297.98px;width:16px;height:1px;background:#d8d8d8"></div>
<div style="position:absolute;left:-90.6px;top:287.82px;width:200px;text-align:center;font-size:9.6px;line-height:9.6px;color:#444;font-weight:normal;white-space:nowrap;">9</div>
<div style="position:absolute;left:1px;top:310.70000000000005px;width:16px;height:1px;background:#d8d8d8"></div>
<div style="position:absolute;left:-90.6px;top:300.54px;width:200px;text-align:center;font-size:9.6px;line-height:9.6px;color:#444;font-weight:normal;white-space:nowrap;">10</div>
<div style="position:absolute;left:1px;top:323.42px;width:16px;height:1px;background:#d8d8d8"></div>
<div style="position:absolute;left:-90.6px;top:313.26px;width:200px;text-align:center;font-size:9.6px;line-height:9.6px;color:#444;font-weight:normal;white-space:nowrap;">11</div>
<div style="position:absolute;left:1px;top:336.14000000000004px;width:16px;height:1px;background:#d8d8d8"></div>
<div style="position:absolute;left:-90.6px;top:325.98px;width:200px;text-align:center;font-size:9.6px;line-height:9.6px;color:#444;font-weight:normal;white-space:nowrap;">12</div>
<div style="position:absolute;left:1px;top:348.86px;width:16px;height:1px;background:#d8d8d8"></div>
<div style="position:absolute;left:-90.6px;top:338.7px;width:200px;text-align:center;font-size:9.6px;line-height:9.6px;color:#444;font-weight:normal;white-space:nowrap;">13</div>
<div style="position:absolute;left:1px;top:361.58000000000004px;width:16px;height:1px;background:#d8d8d8"></div>
<div style="position:absolute;left:-90.6px;top:351.42px;width:200px;text-align:center;font-size:9.6px;line-height:9.6px;color:#444;font-weight:normal;white-space:nowrap;">14</div>
<div style="position:absolute;left:1px;top:374.30000000000007px;width:16px;height:1px;background:#d8d8d8"></div>
<div style="position:absolute;left:-90.6px;top:364.14000000000004px;width:200px;text-align:center;font-size:9.6px;line-height:9.6px;color:#444;font-weight:normal;white-space:nowrap;">15</div>
<div style="position:absolute;left:1px;top:387.02000000000004px;width:16px;height:1px;background:#d8d8d8"></div>
<div style="position:absolute;left:-90.6px;top:376.86px;width:200px;text-align:center;font-size:9.6px;line-height:9.6px;color:#444;font-weight:normal;white-space:nowrap;">16</div>
<div style="position:absolute;left:1px;top:399.74px;width:16px;height:1px;background:#d8d8d8"></div>
<div style="position:absolute;left:-90.6px;top:389.58px;width:200px;text-align:center;font-size:9.6px;line-height:9.6px;color:#444;font-weight:normal;white-space:nowrap;">17</div>
<div style="position:absolute;left:1px;top:412.46000000000004px;width:16px;height:1px;background:#d8d8d8"></div>
<div style="position:absolute;left:-90.6px;top:402.3px;width:200px;text-align:center;font-size:9.6px;line-height:9.6px;color:#444;font-weight:normal;white-space:nowrap;">18</div>
<div style="position:absolute;left:1px;top:425.18000000000006px;width:16px;height:1px;background:#d8d8d8"></div>
<div style="position:absolute;left:-90.6px;top:415.02000000000004px;width:200px;text-align:center;font-size:9.6px;line-height:9.6px;color:#444;font-weight:normal;white-space:nowrap;">19</div>
<div style="position:absolute;left:18px;top:196.22px;width:765px;height:1px;background:#e2e2e2"></div>
<div style="position:absolute;left:18px;top:208.94px;width:765px;height:1px;background:#e2e2e2"></div>
<div style="position:absolute;left:18px;top:221.66px;width:765px;height:1px;background:#e2e2e2"></div>
<div style="position:absolute;left:18px;top:234.38px;width:765px;height:1px;background:#e2e2e2"></div>
<div style="position:absolute;left:18px;top:247.1px;width:765px;height:1px;background:#e2e2e2"></div>
<div style="position:absolute;left:18px;top:259.82px;width:765px;height:1px;background:#e2e2e2"></div>
<div style="position:absolute;left:18px;top:272.54px;width:765px;height:1px;background:#e2e2e2"></div>
<div style="position:absolute;left:18px;top:285.26px;width:765px;height:1px;background:#e2e2e2"></div>
<div style="position:absolute;left:18px;top:297.98px;width:765px;height:1px;background:#e2e2e2"></div>
<div style="position:absolute;left:18px;top:310.7px;width:765px;height:1px;background:#e2e2e2"></div>
<div style="position:absolute;left:18px;top:323.42px;width:765px;height:1px;background:#e2e2e2"></div>
<div style="position:absolute;left:18px;top:336.14px;width:765px;height:1px;background:#e2e2e2"></div>
<div style="position:absolute;left:18px;top:348.86px;width:765px;height:1px;background:#e2e2e2"></div>
<div style="position:absolute;left:18px;top:361.58000000000004px;width:765px;height:1px;background:#e2e2e2"></div>
<div style="position:absolute;left:18px;top:374.3px;width:765px;height:1px;background:#e2e2e2"></div>
<div style="position:absolute;left:18px;top:387.02px;width:765px;height:1px;background:#e2e2e2"></div>
<div style="position:absolute;left:18px;top:399.74px;width:765px;height:1px;background:#e2e2e2"></div>
<div style="position:absolute;left:18px;top:412.46000000000004px;width:765px;height:1px;background:#e2e2e2"></div>
<div style="position:absolute;left:18px;top:425.18px;width:765px;height:1px;background:#e2e2e2"></div>
<div style="position:absolute;left:71.8px;top:184px;width:1px;height:241.5px;background:#e2e2e2"></div>
<div style="position:absolute;left:126.5px;top:184px;width:1px;height:241.5px;background:#e2e2e2"></div>
<div style="position:absolute;left:181.25px;top:184px;width:1px;height:241.5px;background:#e2e2e2"></div>
<div style="position:absolute;left:235.75px;top:184px;width:1px;height:241.5px;background:#e2e2e2"></div>
<div style="position:absolute;left:295.0px;top:184px;width:1px;height:241.5px;background:#e2e2e2"></div>
<div style="position:absolute;left:350.25px;top:184px;width:1px;height:241.5px;background:#e2e2e2"></div>
<div style="position:absolute;left:404.5px;top:184px;width:1px;height:241.5px;background:#e2e2e2"></div>
<div style="position:absolute;left:459.0px;top:184px;width:1px;height:241.5px;background:#e2e2e2"></div>
<div style="position:absolute;left:513.9px;top:184px;width:1px;height:241.5px;background:#e2e2e2"></div>
<div style="position:absolute;left:568.7px;top:184px;width:1px;height:241.5px;background:#e2e2e2"></div>
<div style="position:absolute;left:623.1px;top:184px;width:1px;height:241.5px;background:#e2e2e2"></div>
<div style="position:absolute;left:677.5px;top:184px;width:1px;height:241.5px;background:#e2e2e2"></div>
<div style="position:absolute;left:732.3px;top:184px;width:1px;height:241.5px;background:#e2e2e2"></div>
<div style="position:absolute;left:17.5px;top:184px;width:387.5px;height:190.8px;background:#fbfdf9"></div>
<div style="position:absolute;left:18.5px;top:184px;width:53px;height:11.5px;background:#70ad47"></div>
<div style="position:absolute;left:19.5px;top:186.61px;font-size:8.5px;line-height:8.5px;color:#e0f3d2;font-weight:bold;white-space:nowrap;">DATE</div>
<div style="position:absolute;left:72.5px;top:184px;width:54px;height:11.5px;background:#70ad47"></div>
<div style="position:absolute;left:74.3px;top:186.61px;font-size:8.5px;line-height:8.5px;color:#e0f3d2;font-weight:bold;white-space:nowrap;">Shirts</div>
<div style="position:absolute;left:127.5px;top:184px;width:54px;height:11.5px;background:#70ad47"></div>
<div style="position:absolute;left:129px;top:186.61px;font-size:8.5px;line-height:8.5px;color:#e0f3d2;font-weight:bold;white-space:nowrap;">Shoes</div>
<div style="position:absolute;left:182.5px;top:184px;width:53px;height:11.5px;background:#70ad47"></div>
<div style="position:absolute;left:183.75px;top:186.61px;font-size:8.5px;line-height:8.5px;color:#e0f3d2;font-weight:bold;white-space:nowrap;">Pants</div>
<div style="position:absolute;left:236.5px;top:184px;width:59px;height:11.5px;background:#70ad47"></div>
<div style="position:absolute;left:238.25px;top:186.61px;font-size:8.5px;line-height:8.5px;color:#e0f3d2;font-weight:bold;white-space:nowrap;">Sweatshirts</div>
<div style="position:absolute;left:296.5px;top:184px;width:54px;height:11.5px;background:#70ad47"></div>
<div style="position:absolute;left:297.5px;top:186.61px;font-size:8.5px;line-height:8.5px;color:#e0f3d2;font-weight:bold;white-space:nowrap;">Jackets</div>
<div style="position:absolute;left:351.5px;top:184px;width:53px;height:11.5px;background:#70ad47"></div>
<div style="position:absolute;left:352.75px;top:186.61px;font-size:8.5px;line-height:8.5px;color:#e0f3d2;font-weight:bold;white-space:nowrap;">TOTALS</div>
<div style="position:absolute;left:18.5px;top:197.5px;width:53px;height:11.5px;background:#c6e0b4"></div>
<div style="position:absolute;left:72.5px;top:197.5px;width:54px;height:11.5px;background:#c6e0b4"></div>
<div style="position:absolute;left:127.5px;top:197.5px;width:54px;height:11.5px;background:#c6e0b4"></div>
<div style="position:absolute;left:182.5px;top:197.5px;width:53px;height:11.5px;background:#c6e0b4"></div>
<div style="position:absolute;left:236.5px;top:197.5px;width:59px;height:11.5px;background:#c6e0b4"></div>
<div style="position:absolute;left:296.5px;top:197.5px;width:54px;height:11.5px;background:#c6e0b4"></div>
<div style="position:absolute;left:351.5px;top:197.5px;width:53px;height:11.5px;background:#c6e0b4"></div>
<div style="position:absolute;left:18.5px;top:209px;width:53px;height:13px;background:#e2efda"></div>
<div style="position:absolute;left:18.5px;top:221px;width:53px;height:1px;background:rgba(255,255,255,0.28)"></div>
<div style="position:absolute;left:19.5px;top:211.70000000000002px;font-size:9.2px;line-height:9.2px;color:#262626;font-weight:normal;white-space:nowrap;-webkit-text-stroke:0.25px #262626">March</div>
<div style="position:absolute;left:72.5px;top:209px;width:54px;height:13px;background:#e2efda"></div>
<div style="position:absolute;left:72.5px;top:221px;width:54px;height:1px;background:rgba(255,255,255,0.28)"></div>
<div style="position:absolute;left:-75px;top:212.10000000000002px;width:200px;text-align:right;font-size:8.4px;line-height:8.4px;color:#262626;font-weight:normal;white-space:nowrap;-webkit-text-stroke:0.25px #262626">440</div>
<div style="position:absolute;left:127.5px;top:209px;width:54px;height:13px;background:#e2efda"></div>
<div style="position:absolute;left:127.5px;top:221px;width:54px;height:1px;background:rgba(255,255,255,0.28)"></div>
<div style="position:absolute;left:-20.25px;top:212.10000000000002px;width:200px;text-align:right;font-size:8.4px;line-height:8.4px;color:#262626;font-weight:normal;white-space:nowrap;-webkit-text-stroke:0.25px #262626">300</div>
<div style="position:absolute;left:182.5px;top:209px;width:53px;height:13px;background:#e2efda"></div>
<div style="position:absolute;left:182.5px;top:221px;width:53px;height:1px;background:rgba(255,255,255,0.28)"></div>
<div style="position:absolute;left:34.25px;top:212.10000000000002px;width:200px;text-align:right;font-size:8.4px;line-height:8.4px;color:#262626;font-weight:normal;white-space:nowrap;-webkit-text-stroke:0.25px #262626">600</div>
<div style="position:absolute;left:236.5px;top:209px;width:59px;height:13px;background:#e2efda"></div>
<div style="position:absolute;left:236.5px;top:221px;width:59px;height:1px;background:rgba(255,255,255,0.28)"></div>
<div style="position:absolute;left:93.5px;top:212.10000000000002px;width:200px;text-align:right;font-size:8.4px;line-height:8.4px;color:#262626;font-weight:normal;white-space:nowrap;-webkit-text-stroke:0.25px #262626">600</div>
<div style="position:absolute;left:296.5px;top:209px;width:54px;height:13px;background:#e2efda"></div>
<div style="position:absolute;left:296.5px;top:221px;width:54px;height:1px;background:rgba(255,255,255,0.28)"></div>
<div style="position:absolute;left:148.75px;top:212.10000000000002px;width:200px;text-align:right;font-size:8.4px;line-height:8.4px;color:#262626;font-weight:normal;white-space:nowrap;-webkit-text-stroke:0.25px #262626">1025</div>
<div style="position:absolute;left:351.5px;top:209px;width:53px;height:13px;background:#e2efda"></div>
<div style="position:absolute;left:351.5px;top:221px;width:53px;height:1px;background:rgba(255,255,255,0.28)"></div>
<div style="position:absolute;left:203px;top:212.10000000000002px;width:200px;text-align:right;font-size:8.4px;line-height:8.4px;color:#262626;font-weight:normal;white-space:nowrap;-webkit-text-stroke:0.25px #262626">2965</div>
<div style="position:absolute;left:18.5px;top:222px;width:53px;height:13px;background:#c6e0b4"></div>
<div style="position:absolute;left:18.5px;top:234px;width:53px;height:1px;background:rgba(255,255,255,0.28)"></div>
<div style="position:absolute;left:19.5px;top:224.42000000000002px;font-size:9.2px;line-height:9.2px;color:#262626;font-weight:normal;white-space:nowrap;-webkit-text-stroke:0.25px #262626">February</div>
<div style="position:absolute;left:72.5px;top:222px;width:54px;height:13px;background:#c6e0b4"></div>
<div style="position:absolute;left:72.5px;top:234px;width:54px;height:1px;background:rgba(255,255,255,0.28)"></div>
<div style="position:absolute;left:-75px;top:224.82000000000002px;width:200px;text-align:right;font-size:8.4px;line-height:8.4px;color:#262626;font-weight:normal;white-space:nowrap;-webkit-text-stroke:0.25px #262626">550</div>
<div style="position:absolute;left:127.5px;top:222px;width:54px;height:13px;background:#c6e0b4"></div>
<div style="position:absolute;left:127.5px;top:234px;width:54px;height:1px;background:rgba(255,255,255,0.28)"></div>
<div style="position:absolute;left:-20.25px;top:224.82000000000002px;width:200px;text-align:right;font-size:8.4px;line-height:8.4px;color:#262626;font-weight:normal;white-space:nowrap;-webkit-text-stroke:0.25px #262626">250</div>
<div style="position:absolute;left:182.5px;top:222px;width:53px;height:13px;background:#c6e0b4"></div>
<div style="position:absolute;left:182.5px;top:234px;width:53px;height:1px;background:rgba(255,255,255,0.28)"></div>
<div style="position:absolute;left:34.25px;top:224.82000000000002px;width:200px;text-align:right;font-size:8.4px;line-height:8.4px;color:#262626;font-weight:normal;white-space:nowrap;-webkit-text-stroke:0.25px #262626">650</div>
<div style="position:absolute;left:236.5px;top:222px;width:59px;height:13px;background:#c6e0b4"></div>
<div style="position:absolute;left:236.5px;top:234px;width:59px;height:1px;background:rgba(255,255,255,0.28)"></div>
<div style="position:absolute;left:93.5px;top:224.82000000000002px;width:200px;text-align:right;font-size:8.4px;line-height:8.4px;color:#262626;font-weight:normal;white-space:nowrap;-webkit-text-stroke:0.25px #262626">650</div>
<div style="position:absolute;left:296.5px;top:222px;width:54px;height:13px;background:#c6e0b4"></div>
<div style="position:absolute;left:296.5px;top:234px;width:54px;height:1px;background:rgba(255,255,255,0.28)"></div>
<div style="position:absolute;left:148.75px;top:224.82000000000002px;width:200px;text-align:right;font-size:8.4px;line-height:8.4px;color:#262626;font-weight:normal;white-space:nowrap;-webkit-text-stroke:0.25px #262626">950</div>
<div style="position:absolute;left:351.5px;top:222px;width:53px;height:13px;background:#c6e0b4"></div>
<div style="position:absolute;left:351.5px;top:234px;width:53px;height:1px;background:rgba(255,255,255,0.28)"></div>
<div style="position:absolute;left:203px;top:224.82000000000002px;width:200px;text-align:right;font-size:8.4px;line-height:8.4px;color:#262626;font-weight:normal;white-space:nowrap;-webkit-text-stroke:0.25px #262626">3050</div>
<div style="position:absolute;left:18.5px;top:235px;width:53px;height:13px;background:#e2efda"></div>
<div style="position:absolute;left:18.5px;top:247px;width:53px;height:1px;background:rgba(255,255,255,0.28)"></div>
<div style="position:absolute;left:19.5px;top:237.14000000000001px;font-size:9.2px;line-height:9.2px;color:#262626;font-weight:normal;white-space:nowrap;-webkit-text-stroke:0.25px #262626">April</div>
<div style="position:absolute;left:72.5px;top:235px;width:54px;height:13px;background:#e2efda"></div>
<div style="position:absolute;left:72.5px;top:247px;width:54px;height:1px;background:rgba(255,255,255,0.28)"></div>
<div style="position:absolute;left:-75px;top:237.54000000000002px;width:200px;text-align:right;font-size:8.4px;line-height:8.4px;color:#262626;font-weight:normal;white-space:nowrap;-webkit-text-stroke:0.25px #262626">500</div>
<div style="position:absolute;left:127.5px;top:235px;width:54px;height:13px;background:#e2efda"></div>
<div style="position:absolute;left:127.5px;top:247px;width:54px;height:1px;background:rgba(255,255,255,0.28)"></div>
<div style="position:absolute;left:-20.25px;top:237.54000000000002px;width:200px;text-align:right;font-size:8.4px;line-height:8.4px;color:#262626;font-weight:normal;white-space:nowrap;-webkit-text-stroke:0.25px #262626">350</div>
<div style="position:absolute;left:182.5px;top:235px;width:53px;height:13px;background:#e2efda"></div>
<div style="position:absolute;left:182.5px;top:247px;width:53px;height:1px;background:rgba(255,255,255,0.28)"></div>
<div style="position:absolute;left:34.25px;top:237.54000000000002px;width:200px;text-align:right;font-size:8.4px;line-height:8.4px;color:#262626;font-weight:normal;white-space:nowrap;-webkit-text-stroke:0.25px #262626">650</div>
<div style="position:absolute;left:236.5px;top:235px;width:59px;height:13px;background:#e2efda"></div>
<div style="position:absolute;left:236.5px;top:247px;width:59px;height:1px;background:rgba(255,255,255,0.28)"></div>
<div style="position:absolute;left:93.5px;top:237.54000000000002px;width:200px;text-align:right;font-size:8.4px;line-height:8.4px;color:#262626;font-weight:normal;white-space:nowrap;-webkit-text-stroke:0.25px #262626">700</div>
<div style="position:absolute;left:296.5px;top:235px;width:54px;height:13px;background:#e2efda"></div>
<div style="position:absolute;left:296.5px;top:247px;width:54px;height:1px;background:rgba(255,255,255,0.28)"></div>
<div style="position:absolute;left:148.75px;top:237.54000000000002px;width:200px;text-align:right;font-size:8.4px;line-height:8.4px;color:#262626;font-weight:normal;white-space:nowrap;-webkit-text-stroke:0.25px #262626">900</div>
<div style="position:absolute;left:351.5px;top:235px;width:53px;height:13px;background:#e2efda"></div>
<div style="position:absolute;left:351.5px;top:247px;width:53px;height:1px;background:rgba(255,255,255,0.28)"></div>
<div style="position:absolute;left:203px;top:237.54000000000002px;width:200px;text-align:right;font-size:8.4px;line-height:8.4px;color:#262626;font-weight:normal;white-space:nowrap;-webkit-text-stroke:0.25px #262626">3100</div>
<div style="position:absolute;left:18.5px;top:248px;width:53px;height:12px;background:#c6e0b4"></div>
<div style="position:absolute;left:18.5px;top:259px;width:53px;height:1px;background:rgba(255,255,255,0.28)"></div>
<div style="position:absolute;left:19.5px;top:249.86px;font-size:9.2px;line-height:9.2px;color:#262626;font-weight:normal;white-space:nowrap;-webkit-text-stroke:0.25px #262626">January</div>
<div style="position:absolute;left:72.5px;top:248px;width:54px;height:12px;background:#c6e0b4"></div>
<div style="position:absolute;left:72.5px;top:259px;width:54px;height:1px;background:rgba(255,255,255,0.28)"></div>
<div style="position:absolute;left:-75px;top:250.26000000000002px;width:200px;text-align:right;font-size:8.4px;line-height:8.4px;color:#262626;font-weight:normal;white-space:nowrap;-webkit-text-stroke:0.25px #262626">450</div>
<div style="position:absolute;left:127.5px;top:248px;width:54px;height:12px;background:#c6e0b4"></div>
<div style="position:absolute;left:127.5px;top:259px;width:54px;height:1px;background:rgba(255,255,255,0.28)"></div>
<div style="position:absolute;left:-20.25px;top:250.26000000000002px;width:200px;text-align:right;font-size:8.4px;line-height:8.4px;color:#262626;font-weight:normal;white-space:nowrap;-webkit-text-stroke:0.25px #262626">200</div>
<div style="position:absolute;left:182.5px;top:248px;width:53px;height:12px;background:#c6e0b4"></div>
<div style="position:absolute;left:182.5px;top:259px;width:53px;height:1px;background:rgba(255,255,255,0.28)"></div>
<div style="position:absolute;left:34.25px;top:250.26000000000002px;width:200px;text-align:right;font-size:8.4px;line-height:8.4px;color:#262626;font-weight:normal;white-space:nowrap;-webkit-text-stroke:0.25px #262626">700</div>
<div style="position:absolute;left:236.5px;top:248px;width:59px;height:12px;background:#c6e0b4"></div>
<div style="position:absolute;left:236.5px;top:259px;width:59px;height:1px;background:rgba(255,255,255,0.28)"></div>
<div style="position:absolute;left:93.5px;top:250.26000000000002px;width:200px;text-align:right;font-size:8.4px;line-height:8.4px;color:#262626;font-weight:normal;white-space:nowrap;-webkit-text-stroke:0.25px #262626">800</div>
<div style="position:absolute;left:296.5px;top:248px;width:54px;height:12px;background:#c6e0b4"></div>
<div style="position:absolute;left:296.5px;top:259px;width:54px;height:1px;background:rgba(255,255,255,0.28)"></div>
<div style="position:absolute;left:148.75px;top:250.26000000000002px;width:200px;text-align:right;font-size:8.4px;line-height:8.4px;color:#262626;font-weight:normal;white-space:nowrap;-webkit-text-stroke:0.25px #262626">1000</div>
<div style="position:absolute;left:351.5px;top:248px;width:53px;height:12px;background:#c6e0b4"></div>
<div style="position:absolute;left:351.5px;top:259px;width:53px;height:1px;background:rgba(255,255,255,0.28)"></div>
<div style="position:absolute;left:203px;top:250.26000000000002px;width:200px;text-align:right;font-size:8.4px;line-height:8.4px;color:#262626;font-weight:normal;white-space:nowrap;-webkit-text-stroke:0.25px #262626">3150</div>
<div style="position:absolute;left:18.5px;top:260px;width:53px;height:13px;background:#e2efda"></div>
<div style="position:absolute;left:18.5px;top:272px;width:53px;height:1px;background:rgba(255,255,255,0.28)"></div>
<div style="position:absolute;left:19.5px;top:262.58px;font-size:9.2px;line-height:9.2px;color:#262626;font-weight:normal;white-space:nowrap;-webkit-text-stroke:0.25px #262626">May</div>
<div style="position:absolute;left:72.5px;top:260px;width:54px;height:13px;background:#e2efda"></div>
<div style="position:absolute;left:72.5px;top:272px;width:54px;height:1px;background:rgba(255,255,255,0.28)"></div>
<div style="position:absolute;left:-75px;top:262.98px;width:200px;text-align:right;font-size:8.4px;line-height:8.4px;color:#262626;font-weight:normal;white-space:nowrap;-webkit-text-stroke:0.25px #262626">600</div>
<div style="position:absolute;left:127.5px;top:260px;width:54px;height:13px;background:#e2efda"></div>
<div style="position:absolute;left:127.5px;top:272px;width:54px;height:1px;background:rgba(255,255,255,0.28)"></div>
<div style="position:absolute;left:-20.25px;top:262.98px;width:200px;text-align:right;font-size:8.4px;line-height:8.4px;color:#262626;font-weight:normal;white-space:nowrap;-webkit-text-stroke:0.25px #262626">400</div>
<div style="position:absolute;left:182.5px;top:260px;width:53px;height:13px;background:#e2efda"></div>
<div style="position:absolute;left:182.5px;top:272px;width:53px;height:1px;background:rgba(255,255,255,0.28)"></div>
<div style="position:absolute;left:34.25px;top:262.98px;width:200px;text-align:right;font-size:8.4px;line-height:8.4px;color:#262626;font-weight:normal;white-space:nowrap;-webkit-text-stroke:0.25px #262626">725</div>
<div style="position:absolute;left:236.5px;top:260px;width:59px;height:13px;background:#e2efda"></div>
<div style="position:absolute;left:236.5px;top:272px;width:59px;height:1px;background:rgba(255,255,255,0.28)"></div>
<div style="position:absolute;left:93.5px;top:262.98px;width:200px;text-align:right;font-size:8.4px;line-height:8.4px;color:#262626;font-weight:normal;white-space:nowrap;-webkit-text-stroke:0.25px #262626">550</div>
<div style="position:absolute;left:296.5px;top:260px;width:54px;height:13px;background:#e2efda"></div>
<div style="position:absolute;left:296.5px;top:272px;width:54px;height:1px;background:rgba(255,255,255,0.28)"></div>
<div style="position:absolute;left:148.75px;top:262.98px;width:200px;text-align:right;font-size:8.4px;line-height:8.4px;color:#262626;font-weight:normal;white-space:nowrap;-webkit-text-stroke:0.25px #262626">800</div>
<div style="position:absolute;left:351.5px;top:260px;width:53px;height:13px;background:#e2efda"></div>
<div style="position:absolute;left:351.5px;top:272px;width:53px;height:1px;background:rgba(255,255,255,0.28)"></div>
<div style="position:absolute;left:203px;top:262.98px;width:200px;text-align:right;font-size:8.4px;line-height:8.4px;color:#262626;font-weight:normal;white-space:nowrap;-webkit-text-stroke:0.25px #262626">3075</div>
<div style="position:absolute;left:18.5px;top:273px;width:53px;height:13px;background:#c6e0b4"></div>
<div style="position:absolute;left:18.5px;top:285px;width:53px;height:1px;background:rgba(255,255,255,0.28)"></div>
<div style="position:absolute;left:19.5px;top:275.3px;font-size:9.2px;line-height:9.2px;color:#262626;font-weight:normal;white-space:nowrap;-webkit-text-stroke:0.25px #262626">June</div>
<div style="position:absolute;left:72.5px;top:273px;width:54px;height:13px;background:#c6e0b4"></div>
<div style="position:absolute;left:72.5px;top:285px;width:54px;height:1px;background:rgba(255,255,255,0.28)"></div>
<div style="position:absolute;left:-75px;top:275.70000000000005px;width:200px;text-align:right;font-size:8.4px;line-height:8.4px;color:#262626;font-weight:normal;white-space:nowrap;-webkit-text-stroke:0.25px #262626">700</div>
<div style="position:absolute;left:127.5px;top:273px;width:54px;height:13px;background:#c6e0b4"></div>
<div style="position:absolute;left:127.5px;top:285px;width:54px;height:1px;background:rgba(255,255,255,0.28)"></div>
<div style="position:absolute;left:-20.25px;top:275.70000000000005px;width:200px;text-align:right;font-size:8.4px;line-height:8.4px;color:#262626;font-weight:normal;white-space:nowrap;-webkit-text-stroke:0.25px #262626">400</div>
<div style="position:absolute;left:182.5px;top:273px;width:53px;height:13px;background:#c6e0b4"></div>
<div style="position:absolute;left:182.5px;top:285px;width:53px;height:1px;background:rgba(255,255,255,0.28)"></div>
<div style="position:absolute;left:34.25px;top:275.70000000000005px;width:200px;text-align:right;font-size:8.4px;line-height:8.4px;color:#262626;font-weight:normal;white-space:nowrap;-webkit-text-stroke:0.25px #262626">750</div>
<div style="position:absolute;left:236.5px;top:273px;width:59px;height:13px;background:#c6e0b4"></div>
<div style="position:absolute;left:236.5px;top:285px;width:59px;height:1px;background:rgba(255,255,255,0.28)"></div>
<div style="position:absolute;left:93.5px;top:275.70000000000005px;width:200px;text-align:right;font-size:8.4px;line-height:8.4px;color:#262626;font-weight:normal;white-space:nowrap;-webkit-text-stroke:0.25px #262626">500</div>
<div style="position:absolute;left:296.5px;top:273px;width:54px;height:13px;background:#c6e0b4"></div>
<div style="position:absolute;left:296.5px;top:285px;width:54px;height:1px;background:rgba(255,255,255,0.28)"></div>
<div style="position:absolute;left:148.75px;top:275.70000000000005px;width:200px;text-align:right;font-size:8.4px;line-height:8.4px;color:#262626;font-weight:normal;white-space:nowrap;-webkit-text-stroke:0.25px #262626">650</div>
<div style="position:absolute;left:351.5px;top:273px;width:53px;height:13px;background:#c6e0b4"></div>
<div style="position:absolute;left:351.5px;top:285px;width:53px;height:1px;background:rgba(255,255,255,0.28)"></div>
<div style="position:absolute;left:203px;top:275.70000000000005px;width:200px;text-align:right;font-size:8.4px;line-height:8.4px;color:#262626;font-weight:normal;white-space:nowrap;-webkit-text-stroke:0.25px #262626">3000</div>
<div style="position:absolute;left:18.5px;top:286px;width:53px;height:12px;background:#e2efda"></div>
<div style="position:absolute;left:18.5px;top:297px;width:53px;height:1px;background:rgba(255,255,255,0.28)"></div>
<div style="position:absolute;left:19.5px;top:288.02px;font-size:9.2px;line-height:9.2px;color:#262626;font-weight:normal;white-space:nowrap;-webkit-text-stroke:0.25px #262626">July</div>
<div style="position:absolute;left:72.5px;top:286px;width:54px;height:12px;background:#e2efda"></div>
<div style="position:absolute;left:72.5px;top:297px;width:54px;height:1px;background:rgba(255,255,255,0.28)"></div>
<div style="position:absolute;left:-75px;top:288.42px;width:200px;text-align:right;font-size:8.4px;line-height:8.4px;color:#262626;font-weight:normal;white-space:nowrap;-webkit-text-stroke:0.25px #262626">440</div>
<div style="position:absolute;left:127.5px;top:286px;width:54px;height:12px;background:#e2efda"></div>
<div style="position:absolute;left:127.5px;top:297px;width:54px;height:1px;background:rgba(255,255,255,0.28)"></div>
<div style="position:absolute;left:-20.25px;top:288.42px;width:200px;text-align:right;font-size:8.4px;line-height:8.4px;color:#262626;font-weight:normal;white-space:nowrap;-webkit-text-stroke:0.25px #262626">300</div>
<div style="position:absolute;left:182.5px;top:286px;width:53px;height:12px;background:#e2efda"></div>
<div style="position:absolute;left:182.5px;top:297px;width:53px;height:1px;background:rgba(255,255,255,0.28)"></div>
<div style="position:absolute;left:34.25px;top:288.42px;width:200px;text-align:right;font-size:8.4px;line-height:8.4px;color:#262626;font-weight:normal;white-space:nowrap;-webkit-text-stroke:0.25px #262626">600</div>
<div style="position:absolute;left:236.5px;top:286px;width:59px;height:12px;background:#e2efda"></div>
<div style="position:absolute;left:236.5px;top:297px;width:59px;height:1px;background:rgba(255,255,255,0.28)"></div>
<div style="position:absolute;left:93.5px;top:288.42px;width:200px;text-align:right;font-size:8.4px;line-height:8.4px;color:#262626;font-weight:normal;white-space:nowrap;-webkit-text-stroke:0.25px #262626">600</div>
<div style="position:absolute;left:296.5px;top:286px;width:54px;height:12px;background:#e2efda"></div>
<div style="position:absolute;left:296.5px;top:297px;width:54px;height:1px;background:rgba(255,255,255,0.28)"></div>
<div style="position:absolute;left:148.75px;top:288.42px;width:200px;text-align:right;font-size:8.4px;line-height:8.4px;color:#262626;font-weight:normal;white-space:nowrap;-webkit-text-stroke:0.25px #262626">1025</div>
<div style="position:absolute;left:351.5px;top:286px;width:53px;height:12px;background:#e2efda"></div>
<div style="position:absolute;left:351.5px;top:297px;width:53px;height:1px;background:rgba(255,255,255,0.28)"></div>
<div style="position:absolute;left:203px;top:288.42px;width:200px;text-align:right;font-size:8.4px;line-height:8.4px;color:#262626;font-weight:normal;white-space:nowrap;-webkit-text-stroke:0.25px #262626">2965</div>
<div style="position:absolute;left:18.5px;top:298px;width:53px;height:13px;background:#c6e0b4"></div>
<div style="position:absolute;left:18.5px;top:310px;width:53px;height:1px;background:rgba(255,255,255,0.28)"></div>
<div style="position:absolute;left:19.5px;top:300.74px;font-size:9.2px;line-height:9.2px;color:#262626;font-weight:normal;white-space:nowrap;-webkit-text-stroke:0.25px #262626">August</div>
<div style="position:absolute;left:72.5px;top:298px;width:54px;height:13px;background:#c6e0b4"></div>
<div style="position:absolute;left:72.5px;top:310px;width:54px;height:1px;background:rgba(255,255,255,0.28)"></div>
<div style="position:absolute;left:-75px;top:301.14000000000004px;width:200px;text-align:right;font-size:8.4px;line-height:8.4px;color:#262626;font-weight:normal;white-space:nowrap;-webkit-text-stroke:0.25px #262626">550</div>
<div style="position:absolute;left:127.5px;top:298px;width:54px;height:13px;background:#c6e0b4"></div>
<div style="position:absolute;left:127.5px;top:310px;width:54px;height:1px;background:rgba(255,255,255,0.28)"></div>
<div style="position:absolute;left:-20.25px;top:301.14000000000004px;width:200px;text-align:right;font-size:8.4px;line-height:8.4px;color:#262626;font-weight:normal;white-space:nowrap;-webkit-text-stroke:0.25px #262626">250</div>
<div style="position:absolute;left:182.5px;top:298px;width:53px;height:13px;background:#c6e0b4"></div>
<div style="position:absolute;left:182.5px;top:310px;width:53px;height:1px;background:rgba(255,255,255,0.28)"></div>
<div style="position:absolute;left:34.25px;top:301.14000000000004px;width:200px;text-align:right;font-size:8.4px;line-height:8.4px;color:#262626;font-weight:normal;white-space:nowrap;-webkit-text-stroke:0.25px #262626">650</div>
<div style="position:absolute;left:236.5px;top:298px;width:59px;height:13px;background:#c6e0b4"></div>
<div style="position:absolute;left:236.5px;top:310px;width:59px;height:1px;background:rgba(255,255,255,0.28)"></div>
<div style="position:absolute;left:93.5px;top:301.14000000000004px;width:200px;text-align:right;font-size:8.4px;line-height:8.4px;color:#262626;font-weight:normal;white-space:nowrap;-webkit-text-stroke:0.25px #262626">650</div>
<div style="position:absolute;left:296.5px;top:298px;width:54px;height:13px;background:#c6e0b4"></div>
<div style="position:absolute;left:296.5px;top:310px;width:54px;height:1px;background:rgba(255,255,255,0.28)"></div>
<div style="position:absolute;left:148.75px;top:301.14000000000004px;width:200px;text-align:right;font-size:8.4px;line-height:8.4px;color:#262626;font-weight:normal;white-space:nowrap;-webkit-text-stroke:0.25px #262626">950</div>
<div style="position:absolute;left:351.5px;top:298px;width:53px;height:13px;background:#c6e0b4"></div>
<div style="position:absolute;left:351.5px;top:310px;width:53px;height:1px;background:rgba(255,255,255,0.28)"></div>
<div style="position:absolute;left:203px;top:301.14000000000004px;width:200px;text-align:right;font-size:8.4px;line-height:8.4px;color:#262626;font-weight:normal;white-space:nowrap;-webkit-text-stroke:0.25px #262626">3050</div>
<div style="position:absolute;left:18.5px;top:311px;width:53px;height:13px;background:#e2efda"></div>
<div style="position:absolute;left:18.5px;top:323px;width:53px;height:1px;background:rgba(255,255,255,0.28)"></div>
<div style="position:absolute;left:19.5px;top:313.46px;font-size:9.2px;line-height:9.2px;color:#262626;font-weight:normal;white-space:nowrap;-webkit-text-stroke:0.25px #262626">September</div>
<div style="position:absolute;left:72.5px;top:311px;width:54px;height:13px;background:#e2efda"></div>
<div style="position:absolute;left:72.5px;top:323px;width:54px;height:1px;background:rgba(255,255,255,0.28)"></div>
<div style="position:absolute;left:-75px;top:313.86px;width:200px;text-align:right;font-size:8.4px;line-height:8.4px;color:#262626;font-weight:normal;white-space:nowrap;-webkit-text-stroke:0.25px #262626">500</div>
<div style="position:absolute;left:127.5px;top:311px;width:54px;height:13px;background:#e2efda"></div>
<div style="position:absolute;left:127.5px;top:323px;width:54px;height:1px;background:rgba(255,255,255,0.28)"></div>
<div style="position:absolute;left:-20.25px;top:313.86px;width:200px;text-align:right;font-size:8.4px;line-height:8.4px;color:#262626;font-weight:normal;white-space:nowrap;-webkit-text-stroke:0.25px #262626">350</div>
<div style="position:absolute;left:182.5px;top:311px;width:53px;height:13px;background:#e2efda"></div>
<div style="position:absolute;left:182.5px;top:323px;width:53px;height:1px;background:rgba(255,255,255,0.28)"></div>
<div style="position:absolute;left:34.25px;top:313.86px;width:200px;text-align:right;font-size:8.4px;line-height:8.4px;color:#262626;font-weight:normal;white-space:nowrap;-webkit-text-stroke:0.25px #262626">650</div>
<div style="position:absolute;left:236.5px;top:311px;width:59px;height:13px;background:#e2efda"></div>
<div style="position:absolute;left:236.5px;top:323px;width:59px;height:1px;background:rgba(255,255,255,0.28)"></div>
<div style="position:absolute;left:93.5px;top:313.86px;width:200px;text-align:right;font-size:8.4px;line-height:8.4px;color:#262626;font-weight:normal;white-space:nowrap;-webkit-text-stroke:0.25px #262626">700</div>
<div style="position:absolute;left:296.5px;top:311px;width:54px;height:13px;background:#e2efda"></div>
<div style="position:absolute;left:296.5px;top:323px;width:54px;height:1px;background:rgba(255,255,255,0.28)"></div>
<div style="position:absolute;left:148.75px;top:313.86px;width:200px;text-align:right;font-size:8.4px;line-height:8.4px;color:#262626;font-weight:normal;white-space:nowrap;-webkit-text-stroke:0.25px #262626">900</div>
<div style="position:absolute;left:351.5px;top:311px;width:53px;height:13px;background:#e2efda"></div>
<div style="position:absolute;left:351.5px;top:323px;width:53px;height:1px;background:rgba(255,255,255,0.28)"></div>
<div style="position:absolute;left:203px;top:313.86px;width:200px;text-align:right;font-size:8.4px;line-height:8.4px;color:#262626;font-weight:normal;white-space:nowrap;-webkit-text-stroke:0.25px #262626">3100</div>
<div style="position:absolute;left:18.5px;top:324px;width:53px;height:13px;background:#c6e0b4"></div>
<div style="position:absolute;left:18.5px;top:336px;width:53px;height:1px;background:rgba(255,255,255,0.28)"></div>
<div style="position:absolute;left:19.5px;top:326.18px;font-size:9.2px;line-height:9.2px;color:#262626;font-weight:normal;white-space:nowrap;-webkit-text-stroke:0.25px #262626">October</div>
<div style="position:absolute;left:72.5px;top:324px;width:54px;height:13px;background:#c6e0b4"></div>
<div style="position:absolute;left:72.5px;top:336px;width:54px;height:1px;background:rgba(255,255,255,0.28)"></div>
<div style="position:absolute;left:-75px;top:326.58000000000004px;width:200px;text-align:right;font-size:8.4px;line-height:8.4px;color:#262626;font-weight:normal;white-space:nowrap;-webkit-text-stroke:0.25px #262626">450</div>
<div style="position:absolute;left:127.5px;top:324px;width:54px;height:13px;background:#c6e0b4"></div>
<div style="position:absolute;left:127.5px;top:336px;width:54px;height:1px;background:rgba(255,255,255,0.28)"></div>
<div style="position:absolute;left:-20.25px;top:326.58000000000004px;width:200px;text-align:right;font-size:8.4px;line-height:8.4px;color:#262626;font-weight:normal;white-space:nowrap;-webkit-text-stroke:0.25px #262626">200</div>
<div style="position:absolute;left:182.5px;top:324px;width:53px;height:13px;background:#c6e0b4"></div>
<div style="position:absolute;left:182.5px;top:336px;width:53px;height:1px;background:rgba(255,255,255,0.28)"></div>
<div style="position:absolute;left:34.25px;top:326.58000000000004px;width:200px;text-align:right;font-size:8.4px;line-height:8.4px;color:#262626;font-weight:normal;white-space:nowrap;-webkit-text-stroke:0.25px #262626">700</div>
<div style="position:absolute;left:236.5px;top:324px;width:59px;height:13px;background:#c6e0b4"></div>
<div style="position:absolute;left:236.5px;top:336px;width:59px;height:1px;background:rgba(255,255,255,0.28)"></div>
<div style="position:absolute;left:93.5px;top:326.58000000000004px;width:200px;text-align:right;font-size:8.4px;line-height:8.4px;color:#262626;font-weight:normal;white-space:nowrap;-webkit-text-stroke:0.25px #262626">800</div>
<div style="position:absolute;left:296.5px;top:324px;width:54px;height:13px;background:#c6e0b4"></div>
<div style="position:absolute;left:296.5px;top:336px;width:54px;height:1px;background:rgba(255,255,255,0.28)"></div>
<div style="position:absolute;left:148.75px;top:326.58000000000004px;width:200px;text-align:right;font-size:8.4px;line-height:8.4px;color:#262626;font-weight:normal;white-space:nowrap;-webkit-text-stroke:0.25px #262626">1000</div>
<div style="position:absolute;left:351.5px;top:324px;width:53px;height:13px;background:#c6e0b4"></div>
<div style="position:absolute;left:351.5px;top:336px;width:53px;height:1px;background:rgba(255,255,255,0.28)"></div>
<div style="position:absolute;left:203px;top:326.58000000000004px;width:200px;text-align:right;font-size:8.4px;line-height:8.4px;color:#262626;font-weight:normal;white-space:nowrap;-webkit-text-stroke:0.25px #262626">3150</div>
<div style="position:absolute;left:18.5px;top:337px;width:53px;height:12px;background:#e2efda"></div>
<div style="position:absolute;left:18.5px;top:348px;width:53px;height:1px;background:rgba(255,255,255,0.28)"></div>
<div style="position:absolute;left:19.5px;top:338.9px;font-size:9.2px;line-height:9.2px;color:#262626;font-weight:normal;white-space:nowrap;-webkit-text-stroke:0.25px #262626">November</div>
<div style="position:absolute;left:72.5px;top:337px;width:54px;height:12px;background:#e2efda"></div>
<div style="position:absolute;left:72.5px;top:348px;width:54px;height:1px;background:rgba(255,255,255,0.28)"></div>
<div style="position:absolute;left:-75px;top:339.3px;width:200px;text-align:right;font-size:8.4px;line-height:8.4px;color:#262626;font-weight:normal;white-space:nowrap;-webkit-text-stroke:0.25px #262626">500</div>
<div style="position:absolute;left:127.5px;top:337px;width:54px;height:12px;background:#e2efda"></div>
<div style="position:absolute;left:127.5px;top:348px;width:54px;height:1px;background:rgba(255,255,255,0.28)"></div>
<div style="position:absolute;left:-20.25px;top:339.3px;width:200px;text-align:right;font-size:8.4px;line-height:8.4px;color:#262626;font-weight:normal;white-space:nowrap;-webkit-text-stroke:0.25px #262626">350</div>
<div style="position:absolute;left:182.5px;top:337px;width:53px;height:12px;background:#e2efda"></div>
<div style="position:absolute;left:182.5px;top:348px;width:53px;height:1px;background:rgba(255,255,255,0.28)"></div>
<div style="position:absolute;left:34.25px;top:339.3px;width:200px;text-align:right;font-size:8.4px;line-height:8.4px;color:#262626;font-weight:normal;white-space:nowrap;-webkit-text-stroke:0.25px #262626">650</div>
<div style="position:absolute;left:236.5px;top:337px;width:59px;height:12px;background:#e2efda"></div>
<div style="position:absolute;left:236.5px;top:348px;width:59px;height:1px;background:rgba(255,255,255,0.28)"></div>
<div style="position:absolute;left:93.5px;top:339.3px;width:200px;text-align:right;font-size:8.4px;line-height:8.4px;color:#262626;font-weight:normal;white-space:nowrap;-webkit-text-stroke:0.25px #262626">700</div>
<div style="position:absolute;left:296.5px;top:337px;width:54px;height:12px;background:#e2efda"></div>
<div style="position:absolute;left:296.5px;top:348px;width:54px;height:1px;background:rgba(255,255,255,0.28)"></div>
<div style="position:absolute;left:148.75px;top:339.3px;width:200px;text-align:right;font-size:8.4px;line-height:8.4px;color:#262626;font-weight:normal;white-space:nowrap;-webkit-text-stroke:0.25px #262626">900</div>
<div style="position:absolute;left:351.5px;top:337px;width:53px;height:12px;background:#e2efda"></div>
<div style="position:absolute;left:351.5px;top:348px;width:53px;height:1px;background:rgba(255,255,255,0.28)"></div>
<div style="position:absolute;left:203px;top:339.3px;width:200px;text-align:right;font-size:8.4px;line-height:8.4px;color:#262626;font-weight:normal;white-space:nowrap;-webkit-text-stroke:0.25px #262626">3100</div>
<div style="position:absolute;left:18.5px;top:349px;width:53px;height:12px;background:#c6e0b4"></div>
<div style="position:absolute;left:72.5px;top:349px;width:54px;height:12px;background:#c6e0b4"></div>
<div style="position:absolute;left:127.5px;top:349px;width:54px;height:12px;background:#c6e0b4"></div>
<div style="position:absolute;left:182.5px;top:349px;width:53px;height:12px;background:#c6e0b4"></div>
<div style="position:absolute;left:236.5px;top:349px;width:59px;height:12px;background:#c6e0b4"></div>
<div style="position:absolute;left:296.5px;top:349px;width:54px;height:12px;background:#c6e0b4"></div>
<div style="position:absolute;left:351.5px;top:349px;width:53px;height:12px;background:#c6e0b4"></div>
<div style="position:absolute;left:18.5px;top:362px;width:53px;height:13px;background:#70ad47"></div>
<div style="position:absolute;left:72.5px;top:362px;width:54px;height:13px;background:#70ad47"></div>
<div style="position:absolute;left:-75px;top:364.59000000000003px;width:200px;text-align:right;font-size:8.7px;line-height:8.7px;color:#e2f3d6;font-weight:normal;white-space:nowrap;-webkit-text-stroke:0.2px #e2f3d6">5680</div>
<div style="position:absolute;left:127.5px;top:362px;width:54px;height:13px;background:#70ad47"></div>
<div style="position:absolute;left:-20.25px;top:364.59000000000003px;width:200px;text-align:right;font-size:8.7px;line-height:8.7px;color:#e2f3d6;font-weight:normal;white-space:nowrap;-webkit-text-stroke:0.2px #e2f3d6">3350</div>
<div style="position:absolute;left:182.5px;top:362px;width:53px;height:13px;background:#70ad47"></div>
<div style="position:absolute;left:34.25px;top:364.59000000000003px;width:200px;text-align:right;font-size:8.7px;line-height:8.7px;color:#e2f3d6;font-weight:normal;white-space:nowrap;-webkit-text-stroke:0.2px #e2f3d6">7325</div>
<div style="position:absolute;left:236.5px;top:362px;width:59px;height:13px;background:#70ad47"></div>
<div style="position:absolute;left:93.5px;top:364.59000000000003px;width:200px;text-align:right;font-size:8.7px;line-height:8.7px;color:#e2f3d6;font-weight:normal;white-space:nowrap;-webkit-text-stroke:0.2px #e2f3d6">7250</div>
<div style="position:absolute;left:296.5px;top:362px;width:54px;height:13px;background:#70ad47"></div>
<div style="position:absolute;left:148.75px;top:364.59000000000003px;width:200px;text-align:right;font-size:8.7px;line-height:8.7px;color:#e2f3d6;font-weight:normal;white-space:nowrap;-webkit-text-stroke:0.2px #e2f3d6">10100</div>
<div style="position:absolute;left:351.5px;top:362px;width:53px;height:13px;background:#70ad47"></div>
<div style="position:absolute;left:203px;top:364.59000000000003px;width:200px;text-align:right;font-size:8.7px;line-height:8.7px;color:#e2f3d6;font-weight:normal;white-space:nowrap;-webkit-text-stroke:0.2px #e2f3d6">33705</div>
<svg style="position:absolute;left:400px;top:369px;" width="5" height="5" viewBox="0 0 5 5" fill="none"><path d="M4.5 0.5v4h-4z" fill="#333"/></svg>
<div style="position:absolute;left:15.5px;top:180.7px;width:56.5px;height:181.2px;border:3px solid #df6a5c;box-sizing:border-box"></div>
<div style="position:absolute;left:458.8px;top:204.10000000000002px;width:127.9px;height:172.29999999999998px;background:#fff;border:1.2px solid #666;box-sizing:border-box"></div>
<div style="position:absolute;left:464.5px;top:208.1px;font-size:8.6px;line-height:8.6px;color:#262626;font-weight:bold;white-space:nowrap;transform:scaleX(0.88);transform-origin:left center">DATE</div>
<svg style="position:absolute;left:546px;top:206px;" width="13" height="12" viewBox="0 0 13 12" fill="none"><path d="M0.8 2l1.5 1.5 2.5-3 M0.8 6l1.5 1.5 2.5-3 M0.8 10l1.5 1.5 2.5-3" stroke="#555" stroke-width="0.9"/><path d="M6 2.5h6 M6 6.5h6 M6 10.5h6" stroke="#555" stroke-width="1"/></svg>
<svg style="position:absolute;left:566px;top:205px;" width="14" height="14" viewBox="0 0 14 14" fill="none"><path d="M1 1h11.5l-4.5 5.5v6.5l-2.5-2v-4.5z" stroke="#c6c6c6" stroke-width="1.4" fill="#ececec" stroke-linejoin="round"/><path d="M9.5 9l3.5 3.5 M13 9l-3.5 3.5" stroke="#c6c6c6" stroke-width="1.2"/></svg>
<div style="position:absolute;left:463px;top:220px;width:118px;height:1px;background:#dcdcdc"></div>
<div style="position:absolute;left:571.5px;top:222px;width:8.5px;height:151px;background:#f0f0f0"></div>
<div style="position:absolute;left:572px;top:236px;width:7.5px;height:69.5px;background:#d2d2d2"></div>
<svg style="position:absolute;left:572px;top:228px;" width="8" height="5" viewBox="0 0 8 5" fill="none"><path d="M1.5 3.8l2.5-2.5 2.5 2.5" stroke="#555" stroke-width="1.1"/></svg>
<svg style="position:absolute;left:572px;top:361px;" width="8" height="5" viewBox="0 0 8 5" fill="none"><path d="M1.5 1.2l2.5 2.5 2.5-2.5" stroke="#555" stroke-width="1.1"/></svg>
<div style="position:absolute;left:464.7px;top:223.9px;width:101.3px;height:16.3px;background:#b4c6e7;border:1px solid #a4b9de;border-radius:1.5px;box-sizing:border-box"></div>
<div style="position:absolute;left:470.3px;top:227.95000000000002px;font-size:8.7px;line-height:8.7px;color:#1c2a4a;font-weight:normal;white-space:nowrap;-webkit-text-stroke:0.2px #1c2a4a">January</div>
<div style="position:absolute;left:464.7px;top:242.70000000000002px;width:101.3px;height:16.3px;background:#b4c6e7;border:1px solid #a4b9de;border-radius:1.5px;box-sizing:border-box"></div>
<div style="position:absolute;left:470.3px;top:246.75000000000003px;font-size:8.7px;line-height:8.7px;color:#1c2a4a;font-weight:normal;white-space:nowrap;-webkit-text-stroke:0.2px #1c2a4a">February</div>
<div style="position:absolute;left:464.7px;top:261.5px;width:101.3px;height:16.3px;background:#b4c6e7;border:1px solid #a4b9de;border-radius:1.5px;box-sizing:border-box"></div>
<div style="position:absolute;left:470.3px;top:265.54999999999995px;font-size:8.7px;line-height:8.7px;color:#1c2a4a;font-weight:normal;white-space:nowrap;-webkit-text-stroke:0.2px #1c2a4a">March</div>
<div style="position:absolute;left:464.7px;top:280.3px;width:101.3px;height:16.3px;background:#b4c6e7;border:1px solid #a4b9de;border-radius:1.5px;box-sizing:border-box"></div>
<div style="position:absolute;left:470.3px;top:284.34999999999997px;font-size:8.7px;line-height:8.7px;color:#1c2a4a;font-weight:normal;white-space:nowrap;-webkit-text-stroke:0.2px #1c2a4a">April</div>
<div style="position:absolute;left:464.7px;top:299.1px;width:101.3px;height:16.3px;background:#b4c6e7;border:1px solid #a4b9de;border-radius:1.5px;box-sizing:border-box"></div>
<div style="position:absolute;left:470.3px;top:303.15px;font-size:8.7px;line-height:8.7px;color:#1c2a4a;font-weight:normal;white-space:nowrap;-webkit-text-stroke:0.2px #1c2a4a">May</div>
<div style="position:absolute;left:464.7px;top:317.9px;width:101.3px;height:16.3px;background:#b4c6e7;border:1px solid #a4b9de;border-radius:1.5px;box-sizing:border-box"></div>
<div style="position:absolute;left:470.3px;top:321.94999999999993px;font-size:8.7px;line-height:8.7px;color:#1c2a4a;font-weight:normal;white-space:nowrap;-webkit-text-stroke:0.2px #1c2a4a">June</div>
<div style="position:absolute;left:464.7px;top:336.70000000000005px;width:101.3px;height:16.3px;background:#b4c6e7;border:1px solid #a4b9de;border-radius:1.5px;box-sizing:border-box"></div>
<div style="position:absolute;left:470.3px;top:340.75px;font-size:8.7px;line-height:8.7px;color:#1c2a4a;font-weight:normal;white-space:nowrap;-webkit-text-stroke:0.2px #1c2a4a">July</div>
<div style="position:absolute;left:464.7px;top:355.5px;width:101.3px;height:16.3px;background:#b4c6e7;border:1px solid #a4b9de;border-radius:1.5px;box-sizing:border-box"></div>
<div style="position:absolute;left:470.3px;top:359.54999999999995px;font-size:8.7px;line-height:8.7px;color:#1c2a4a;font-weight:normal;white-space:nowrap;-webkit-text-stroke:0.2px #1c2a4a">August</div>
<div style="position:absolute;left:461px;top:219.3px;width:109px;height:153.7px;border:3px solid #df6a5c;box-sizing:border-box"></div>
<svg style="position:absolute;left:453.5px;top:198.8px;" width="11" height="11" viewBox="0 0 11 11" fill="none"><circle cx="5.5" cy="5.5" r="4.3" fill="#fff" stroke="#5a5a5a" stroke-width="1.1"/></svg>
<svg style="position:absolute;left:453.5px;top:284.7px;" width="11" height="11" viewBox="0 0 11 11" fill="none"><circle cx="5.5" cy="5.5" r="4.3" fill="#fff" stroke="#5a5a5a" stroke-width="1.1"/></svg>
<svg style="position:absolute;left:453.5px;top:370.7px;" width="11" height="11" viewBox="0 0 11 11" fill="none"><circle cx="5.5" cy="5.5" r="4.3" fill="#fff" stroke="#5a5a5a" stroke-width="1.1"/></svg>
<svg style="position:absolute;left:517.0px;top:198.8px;" width="11" height="11" viewBox="0 0 11 11" fill="none"><circle cx="5.5" cy="5.5" r="4.3" fill="#fff" stroke="#5a5a5a" stroke-width="1.1"/></svg>
<svg style="position:absolute;left:517.0px;top:370.7px;" width="11" height="11" viewBox="0 0 11 11" fill="none"><circle cx="5.5" cy="5.5" r="4.3" fill="#fff" stroke="#5a5a5a" stroke-width="1.1"/></svg>
<svg style="position:absolute;left:581.0px;top:198.8px;" width="11" height="11" viewBox="0 0 11 11" fill="none"><circle cx="5.5" cy="5.5" r="4.3" fill="#fff" stroke="#5a5a5a" stroke-width="1.1"/></svg>
<svg style="position:absolute;left:581.0px;top:284.7px;" width="11" height="11" viewBox="0 0 11 11" fill="none"><circle cx="5.5" cy="5.5" r="4.3" fill="#fff" stroke="#5a5a5a" stroke-width="1.1"/></svg>
<svg style="position:absolute;left:581.0px;top:370.7px;" width="11" height="11" viewBox="0 0 11 11" fill="none"><circle cx="5.5" cy="5.5" r="4.3" fill="#fff" stroke="#5a5a5a" stroke-width="1.1"/></svg>
<div style="position:absolute;left:783px;top:166.5px;width:15.6px;height:259px;background:#e9e9e9"></div>
<div style="position:absolute;left:782.5px;top:184px;width:1px;height:241px;background:#c4c4c4"></div>
<div style="position:absolute;left:784px;top:172.5px;width:13px;height:12.5px;background:#fff;border:1px solid #cfcfcf;box-sizing:border-box"></div>
<svg style="position:absolute;left:787px;top:176px;" width="8" height="5" viewBox="0 0 8 5" fill="none"><path d="M0.8 4.2h6.4l-3.2-3.7z" fill="#222"/></svg>
<div style="position:absolute;left:784px;top:186px;width:13px;height:214.5px;background:#fff;border:1px solid #cfcfcf;box-sizing:border-box"></div>
<div style="position:absolute;left:784px;top:412.5px;width:13px;height:12.5px;background:#fff;border:1px solid #cfcfcf;box-sizing:border-box"></div>
<svg style="position:absolute;left:787px;top:416.5px;" width="8" height="5" viewBox="0 0 8 5" fill="none"><path d="M0.8 0.8h6.4l-3.2 3.7z" fill="#222"/></svg>
<div style="position:absolute;left:1px;top:425px;width:797px;height:19.5px;background:#e6e6e6"></div>
<div style="position:absolute;left:1px;top:425px;width:782px;height:1px;background:#c8c8c8"></div>
<svg style="position:absolute;left:18px;top:430px;" width="6" height="8" viewBox="0 0 6 8" fill="none"><path d="M5 0.5v7l-4.5-3.5z" fill="#444"/></svg>
<svg style="position:absolute;left:37px;top:430px;" width="6" height="8" viewBox="0 0 6 8" fill="none"><path d="M1 0.5v7l4.5-3.5z" fill="#444"/></svg>
<div style="position:absolute;left:54px;top:436px;width:1.4px;height:1.4px;background:#444"></div>
<div style="position:absolute;left:58px;top:436px;width:1.4px;height:1.4px;background:#444"></div>
<div style="position:absolute;left:62px;top:436px;width:1.4px;height:1.4px;background:#444"></div>
<div style="position:absolute;left:79px;top:427.3px;font-size:10.5px;line-height:11px;color:#505050;white-space:nowrap;transform:scaleX(1.004);transform-origin:left top">TIMEFUNCTIONS</div>
<div style="position:absolute;left:186.75px;top:427.3px;font-size:10.5px;line-height:11px;color:#505050;white-space:nowrap;transform:scaleX(1.072);transform-origin:left top">DateTimeFunctions</div>
<div style="position:absolute;left:303.7px;top:427.3px;font-size:10.5px;line-height:11px;color:#505050;white-space:nowrap;transform:scaleX(1.008);transform-origin:left top">RAND</div>
<div style="position:absolute;left:351.7px;top:427.3px;font-size:10.5px;line-height:11px;color:#505050;white-space:nowrap;transform:scaleX(1.037);transform-origin:left top">Sheet6</div>
<div style="position:absolute;left:405px;top:427.3px;font-size:10.5px;line-height:11px;color:#505050;white-space:nowrap;transform:scaleX(1.013);transform-origin:left top">Sheet4</div>
<div style="position:absolute;left:457.4px;top:427.3px;font-size:10.5px;line-height:11px;color:#505050;white-space:nowrap;transform:scaleX(1.066);transform-origin:left top">Chart1</div>
<div style="position:absolute;left:555.5px;top:427.3px;font-size:10.5px;line-height:11px;color:#505050;white-space:nowrap;transform:scaleX(1.035);transform-origin:left top">Sheet13</div>
<div style="position:absolute;left:615.5px;top:427.3px;font-size:10.5px;line-height:11px;color:#505050;white-space:nowrap;transform:scaleX(1.03);transform-origin:left top">In ...</div>
<div style="position:absolute;left:69.9px;top:427.5px;width:1px;height:14px;background:#c0c0c0"></div>
<div style="position:absolute;left:177.1px;top:427.5px;width:1px;height:14px;background:#c0c0c0"></div>
<div style="position:absolute;left:295.1px;top:427.5px;width:1px;height:14px;background:#c0c0c0"></div>
<div style="position:absolute;left:343.9px;top:427.5px;width:1px;height:14px;background:#c0c0c0"></div>
<div style="position:absolute;left:396.7px;top:427.5px;width:1px;height:14px;background:#c0c0c0"></div>
<div style="position:absolute;left:449.2px;top:427.5px;width:1px;height:14px;background:#c0c0c0"></div>
<div style="position:absolute;left:605.6px;top:427.5px;width:1px;height:14px;background:#c0c0c0"></div>
<div style="position:absolute;left:501.5px;top:424.5px;width:45px;height:17.5px;background:#fff"></div>
<div style="position:absolute;left:501.5px;top:440.5px;width:45px;height:2px;background:#217346"></div>
<div style="position:absolute;left:509px;top:427.3px;font-size:10.5px;line-height:11px;color:#217346;font-weight:bold;white-space:nowrap;transform:scaleX(1.069);transform-origin:left top">Table</div>
<svg style="position:absolute;left:645px;top:427px;" width="14" height="14" viewBox="0 0 14 14" fill="none"><circle cx="7" cy="7" r="6" stroke="#555" stroke-width="1"/><path d="M7 3.5v7 M3.5 7h7" stroke="#555" stroke-width="1.1"/></svg>
<div style="position:absolute;left:670.5px;top:430px;width:1.2px;height:1.2px;background:#9a9a9a"></div>
<div style="position:absolute;left:670.5px;top:434px;width:1.2px;height:1.2px;background:#9a9a9a"></div>
<div style="position:absolute;left:670.5px;top:438px;width:1.2px;height:1.2px;background:#9a9a9a"></div>
<div style="position:absolute;left:682.6px;top:428px;width:12.4px;height:12.6px;background:#fff;border:1px solid #c6c6c6;box-sizing:border-box"></div>
<svg style="position:absolute;left:686px;top:431px;" width="6" height="8" viewBox="0 0 6 8" fill="none"><path d="M5 0.5v6.5l-4.5-3.25z" fill="#222"/></svg>
<div style="position:absolute;left:695.5px;top:428px;width:68px;height:12.6px;background:#fff;border:1px solid #c6c6c6;box-sizing:border-box"></div>
<div style="position:absolute;left:770.4px;top:428px;width:12px;height:12.6px;background:#fff;border:1px solid #c6c6c6;box-sizing:border-box"></div>
<svg style="position:absolute;left:774px;top:431px;" width="6" height="8" viewBox="0 0 6 8" fill="none"><path d="M1 0.5v6.5l4.5-3.25z" fill="#222"/></svg>
<div style="position:absolute;left:1px;top:444.5px;width:797px;height:17px;background:#f3f2f1"></div>
<div style="position:absolute;left:7px;top:449.35px;font-size:8.3px;line-height:8.3px;color:#444;font-weight:normal;white-space:nowrap;">Ready</div>
<svg style="position:absolute;left:46px;top:446px;" width="16" height="14" viewBox="0 0 16 14" fill="none"><rect x="1" y="2" width="11" height="9" stroke="#555" stroke-width="1"/><path d="M1 4.5h11" stroke="#555" stroke-width="1"/><circle cx="10" cy="9" r="3.5" fill="#f3f2f1" stroke="#555" stroke-width="1"/><circle cx="10" cy="9" r="1.5" fill="#555"/></svg>
<svg style="position:absolute;left:454px;top:446px;" width="14" height="13" viewBox="0 0 14 13" fill="none"><rect x="0.6" y="0.6" width="12" height="8" stroke="#555" stroke-width="1"/><path d="M4 11.5h5 M6.5 9v2.5" stroke="#555" stroke-width="1"/><circle cx="9.5" cy="9" r="2.2" fill="#f3f2f1" stroke="#555" stroke-width="0.9"/></svg>
<div style="position:absolute;left:469.4px;top:449.275px;font-size:8.45px;line-height:8.45px;color:#444;font-weight:normal;white-space:nowrap;">Display Settings</div>
<div style="position:absolute;left:546.5px;top:444.5px;width:33px;height:17px;background:#dcdcdc"></div>
<svg style="position:absolute;left:557px;top:447px;" width="12" height="12" viewBox="0 0 12 12" fill="none"><rect x="0.5" y="0.5" width="11" height="11" stroke="#555" stroke-width="1"/><path d="M4.17 0.5v11 M7.83 0.5v11 M0.5 4.17h11 M0.5 7.83h11" stroke="#555" stroke-width="1"/></svg>
<svg style="position:absolute;left:590.5px;top:447px;" width="12" height="12" viewBox="0 0 12 12" fill="none"><rect x="0.5" y="0.5" width="11" height="11" stroke="#555" stroke-width="1"/><rect x="3" y="3" width="6" height="6" stroke="#555" stroke-width="1"/></svg>
<svg style="position:absolute;left:623.5px;top:447px;" width="12" height="12" viewBox="0 0 12 12" fill="none"><path d="M0.5 11.5v-11h11v11 M0.5 8.5h11 M6 0.5v8" stroke="#555" stroke-width="1"/></svg>
<div style="position:absolute;left:650px;top:452.5px;width:7px;height:1.2px;background:#666"></div>
<div style="position:absolute;left:662px;top:452.7px;width:83px;height:1px;background:#a8a8a8"></div>
<div style="position:absolute;left:693.5px;top:448.5px;width:3.2px;height:9px;background:#333"></div>
<div style="position:absolute;left:703px;top:450px;width:1px;height:5px;background:#666"></div>
<div style="position:absolute;left:749px;top:452.5px;width:7px;height:1.2px;background:#666"></div>
<div style="position:absolute;left:751.9px;top:449.6px;width:1.2px;height:7px;background:#666"></div>
<div style="position:absolute;left:766.5px;top:449.35px;font-size:8.3px;line-height:8.3px;color:#555;font-weight:normal;white-space:nowrap;">80%</div>
<div style="position:absolute;left:0px;top:28px;width:1.2px;height:435px;background:#3d7455"></div>
<div style="position:absolute;left:798.6px;top:28px;width:1.4px;height:435px;background:#6f8f7c"></div>
<div style="position:absolute;left:0px;top:461.8px;width:800px;height:1.2px;background:#4d7d60"></div>
</body></html>
